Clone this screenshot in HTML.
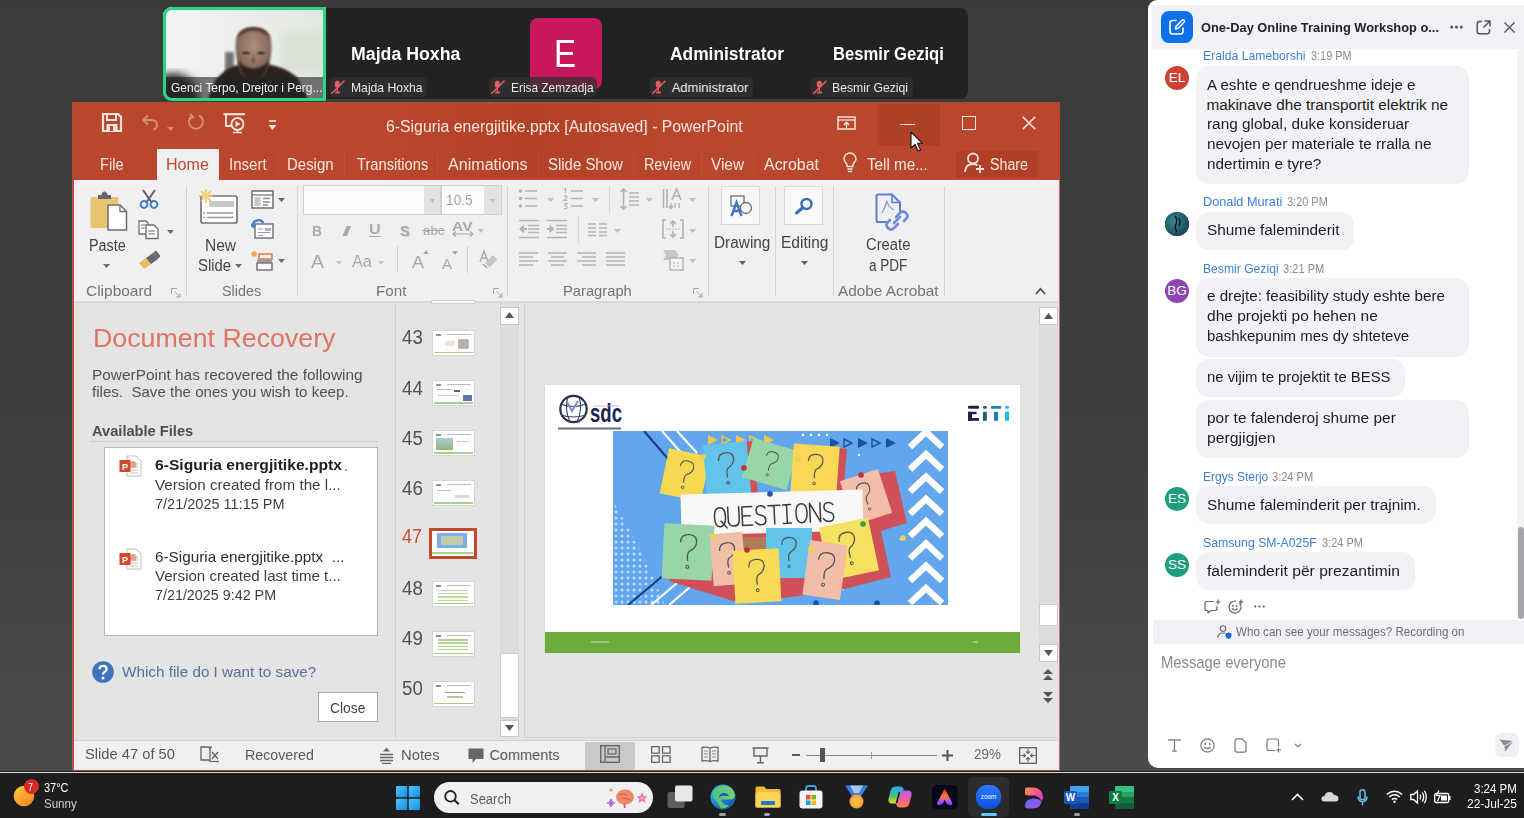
<!DOCTYPE html>
<html><head><meta charset="utf-8">
<style>
*{box-sizing:border-box;margin:0;padding:0}
html,body{width:1524px;height:818px;overflow:hidden;background:linear-gradient(#3b3b3b 0px,#3d3d3d 420px,#4b4b4b 771px,#1d1d1d 771px);font-family:"Liberation Sans",sans-serif;position:relative}
.a{position:absolute}
.t{position:absolute;white-space:pre;line-height:1;transform-origin:0 0}
svg{position:absolute;overflow:visible}

</style></head><body>
<div class="a" style="left:163px;top:8px;width:805px;height:91px;background:#222;border-radius:8px"></div>
<div class="a" style="left:163px;top:7px;width:163px;height:94px;border-radius:9px 2px 2px 9px;overflow:hidden;background:#e9ecea">
<svg style="left:0;top:0" width="163" height="94" viewBox="0 0 163 94">
<defs>
<filter id="bl4"><feGaussianBlur stdDeviation="4"/></filter>
<filter id="bl2"><feGaussianBlur stdDeviation="1.6"/></filter>
<filter id="bl1"><feGaussianBlur stdDeviation="0.9"/></filter>
<linearGradient id="vbg" x1="0" y1="0" x2="1" y2="0"><stop offset="0" stop-color="#f3f5f4"/><stop offset="0.5" stop-color="#eceeec"/><stop offset="1" stop-color="#e2e6e0"/></linearGradient>
<radialGradient id="skin" cx="0.5" cy="0.35" r="0.7"><stop offset="0" stop-color="#b09080"/><stop offset="0.6" stop-color="#8a6a5c"/><stop offset="1" stop-color="#5e4a42"/></radialGradient>
</defs>
<rect width="163" height="94" fill="url(#vbg)"/>
<rect x="118" y="25" width="45" height="40" fill="#dde2d8" filter="url(#bl4)"/>
<ellipse cx="10" cy="90" rx="26" ry="24" fill="#2a2a2a" filter="url(#bl4)"/>
<rect x="62" y="45" width="9" height="28" fill="#707270" filter="url(#bl2)"/>
<path d="M44 94 L52 74 Q62 60 78 57 L104 57 Q122 60 134 70 L146 94 Z" fill="#2b2421" filter="url(#bl1)"/>
<path d="M72.5 41 Q72 20 90.5 20 Q109 20 108.5 41 Q108 60 100 69 Q95 74 90.5 74 Q86 74 81 69 Q73 60 72.5 41 Z" fill="url(#skin)" filter="url(#bl1)"/>
<path d="M73 34 Q75 21 90.5 20.5 Q106 21 108 34 Q104 24 90.5 23.5 Q77 24 73 34 Z" fill="#4a3a34" filter="url(#bl1)"/>
<path d="M75 53 Q77 66 83 71.5 Q90.5 77 98 71.5 Q104 66 106 53 Q101 61 90.5 61.5 Q80 61 75 53 Z" fill="#2c221f" filter="url(#bl1)"/>
<ellipse cx="83" cy="46" rx="4" ry="1.6" fill="#3e2e28" filter="url(#bl1)"/>
<ellipse cx="98" cy="46" rx="4" ry="1.6" fill="#3e2e28" filter="url(#bl1)"/>
<path d="M90 47 L88.5 56 L92.5 56 Z" fill="#6a5048" filter="url(#bl1)"/>
<rect x="0" y="70" width="163" height="24" fill="rgba(35,35,35,0.6)"/>
</svg>
</div>
<div class="a" style="left:163px;top:7px;width:163px;height:94px;border-radius:9px 2px 2px 9px;border:3px solid #25d882"></div>
<span class="t" id="t0" style="left:170.50px;top:80.69px;font-size:13.00px;color:#f0f0f0;transform:scaleX(0.9210);">Genci Terpo, Drejtor i Perg...</span>
<div class="a" style="left:530px;top:18px;width:72px;height:71px;background:#c8185d;border-radius:8px"></div>
<span class="t" id="t1" style="left:554.00px;top:34.18px;font-size:39.00px;color:#ffffff;transform:scaleX(0.8456);">E</span>
<span class="t" id="t2" style="left:350.60px;top:44.91px;font-size:18.30px;color:#ffffff;font-weight:700;transform:scaleX(0.9702);">Majda Hoxha</span>
<div class="a" style="left:329px;top:77px;width:98px;height:20px;background:rgba(50,50,50,0.75);border-radius:5px"></div>
<svg style="left:331px;top:80px" width="14" height="14" viewBox="0 0 14 14"><rect x="3.8" y="0.7" width="5" height="7" rx="2.5" fill="#e85a60"/><rect x="5.8" y="7" width="1.2" height="4.5" fill="#e85a60"/><rect x="4" y="11.5" width="5" height="1.9" rx="0.8" fill="#e85a60"/><path d="M0.8 13.2 L13 1.2" stroke="#e85a60" stroke-width="1.6" stroke-linecap="round"/></svg>
<span class="t" id="t3" style="left:350.60px;top:80.89px;font-size:13.00px;color:#e8e8e8;transform:scaleX(0.9346);">Majda Hoxha</span>
<div class="a" style="left:489px;top:77px;width:108px;height:20px;background:rgba(50,50,50,0.75);border-radius:5px"></div>
<svg style="left:491px;top:80px" width="14" height="14" viewBox="0 0 14 14"><rect x="3.8" y="0.7" width="5" height="7" rx="2.5" fill="#e85a60"/><rect x="5.8" y="7" width="1.2" height="4.5" fill="#e85a60"/><rect x="4" y="11.5" width="5" height="1.9" rx="0.8" fill="#e85a60"/><path d="M0.8 13.2 L13 1.2" stroke="#e85a60" stroke-width="1.6" stroke-linecap="round"/></svg>
<span class="t" id="t4" style="left:510.80px;top:80.89px;font-size:13.00px;color:#e8e8e8;transform:scaleX(0.9135);">Erisa Zemzadja</span>
<span class="t" id="t5" style="left:670.40px;top:44.91px;font-size:18.30px;color:#ffffff;font-weight:700;transform:scaleX(0.9503);">Administrator</span>
<div class="a" style="left:650px;top:77px;width:103px;height:20px;background:rgba(50,50,50,0.75);border-radius:5px"></div>
<svg style="left:652px;top:80px" width="14" height="14" viewBox="0 0 14 14"><rect x="3.8" y="0.7" width="5" height="7" rx="2.5" fill="#e85a60"/><rect x="5.8" y="7" width="1.2" height="4.5" fill="#e85a60"/><rect x="4" y="11.5" width="5" height="1.9" rx="0.8" fill="#e85a60"/><path d="M0.8 13.2 L13 1.2" stroke="#e85a60" stroke-width="1.6" stroke-linecap="round"/></svg>
<span class="t" id="t6" style="left:671.70px;top:80.89px;font-size:13.00px;color:#e8e8e8;">Administrator</span>
<span class="t" id="t7" style="left:833.10px;top:44.91px;font-size:18.30px;color:#ffffff;font-weight:700;transform:scaleX(0.9096);">Besmir Geziqi</span>
<div class="a" style="left:811px;top:77px;width:102px;height:20px;background:rgba(50,50,50,0.75);border-radius:5px"></div>
<svg style="left:813px;top:80px" width="14" height="14" viewBox="0 0 14 14"><rect x="3.8" y="0.7" width="5" height="7" rx="2.5" fill="#e85a60"/><rect x="5.8" y="7" width="1.2" height="4.5" fill="#e85a60"/><rect x="4" y="11.5" width="5" height="1.9" rx="0.8" fill="#e85a60"/><path d="M0.8 13.2 L13 1.2" stroke="#e85a60" stroke-width="1.6" stroke-linecap="round"/></svg>
<span class="t" id="t8" style="left:832.40px;top:80.89px;font-size:13.00px;color:#e8e8e8;transform:scaleX(0.9404);">Besmir Geziqi</span>
<div class="a" style="left:72px;top:102px;width:988px;height:670px;background:#e4e4e4"></div>
<div class="a" style="left:72px;top:102px;width:988px;height:78px;background:#b9472d"></div>
<div class="a" style="left:380px;top:104px;width:300px;height:74px;background:linear-gradient(90deg,rgba(150,40,20,0) 0%,rgba(150,40,20,0.18) 50%,rgba(150,40,20,0) 100%)"></div>
<div class="a" style="left:878px;top:104px;width:62px;height:42px;background:rgba(140,40,20,0.22)"></div>
<svg style="left:102px;top:113px" width="20" height="19" viewBox="0 0 20 19"><path d="M1 1 H16 L19 4 V18 H1 Z" fill="none" stroke="#f6e4dc" stroke-width="2.2"/><rect x="5" y="1" width="9" height="6" fill="none" stroke="#f6e4dc" stroke-width="2"/><rect x="4.5" y="11" width="11" height="7" fill="#f6e4dc"/><rect x="8" y="13" width="3" height="5" fill="#b9472d"/></svg>
<svg style="left:141px;top:114px" width="18" height="17" viewBox="0 0 18 17"><path d="M2 6 L7 1.5 M2 6 L7 10.5 M2 6 H10 Q16 6 16 11 Q16 15 12 15.5" fill="none" stroke="#d98a72" stroke-width="2"/></svg>
<svg style="left:167px;top:127px" width="7" height="5" viewBox="0 0 7 5"><path d="M0 0 H7 L3.5 4 Z" fill="#d98a72"/></svg>
<svg style="left:187px;top:113px" width="18" height="18" viewBox="0 0 18 18"><path d="M12 2.5 A7 7 0 1 1 5 3" fill="none" stroke="#d98a72" stroke-width="2"/><path d="M3 1 L6 4 L2.5 6" fill="none" stroke="#d98a72" stroke-width="2"/></svg>
<svg style="left:223px;top:113px" width="23" height="21" viewBox="0 0 23 21"><path d="M0.5 1.2 H22" stroke="#f6e4dc" stroke-width="2.2"/><path d="M3 2 V13 H8" fill="none" stroke="#f6e4dc" stroke-width="1.8"/><circle cx="14.5" cy="11" r="6" fill="none" stroke="#f6e4dc" stroke-width="1.8"/><path d="M12.5 8 L17.5 11 L12.5 14 Z" fill="#f6e4dc"/><path d="M10 19.5 H19 M14.5 17 V20" stroke="#f6e4dc" stroke-width="1.6"/></svg>
<svg style="left:268px;top:120px" width="9" height="11" viewBox="0 0 9 11"><path d="M1 1 H8" stroke="#f6e4dc" stroke-width="1.6"/><path d="M0.5 5 H8.5 L4.5 10 Z" fill="#f6e4dc"/></svg>
<span class="t" id="t9" style="left:386.40px;top:119.05px;font-size:16.00px;color:#f8e6de;transform:scaleX(0.9876);">6-Siguria energjitike.pptx [Autosaved] - PowerPoint</span>
<svg style="left:837px;top:116px" width="19" height="14" viewBox="0 0 19 14"><rect x="1" y="1" width="17" height="12" fill="none" stroke="#f6e4dc" stroke-width="1.5"/><path d="M1 4 H18" stroke="#f6e4dc" stroke-width="1.3"/><path d="M9.5 12 V6.5 M6.8 9 L9.5 6.3 L12.2 9" fill="none" stroke="#f6e4dc" stroke-width="1.4"/></svg>
<div class="a" style="left:900px;top:123.5px;width:15px;height:1.2px;background:#f6e4dc"></div>
<div class="a" style="left:962px;top:116px;width:14px;height:14px;border:1.3px solid #f6e4dc"></div>
<svg style="left:1022px;top:116px" width="14" height="14" viewBox="0 0 14 14"><path d="M0.7 0.7 L13.3 13.3 M13.3 0.7 L0.7 13.3" stroke="#f6e4dc" stroke-width="1.6"/></svg>
<svg style="left:910px;top:131px" width="13" height="21" viewBox="0 0 13 21"><path d="M1 1 V17 L5 13.3 L8 20 L10.5 19 L7.6 12.3 L12.5 12.3 Z" fill="#ffffff" stroke="#111" stroke-width="1.1" stroke-linejoin="round"/></svg>
<div class="a" style="left:157px;top:149px;width:62px;height:32px;background:#f0eff2"></div>
<span class="t" id="t10" style="left:100.40px;top:157.09px;font-size:15.60px;color:#f8e6de;transform:scaleX(0.9387);">File</span>
<span class="t" id="t11" style="left:166.30px;top:157.09px;font-size:15.60px;color:#c5462c;transform:scaleX(1.0310);">Home</span>
<span class="t" id="t12" style="left:229.30px;top:157.09px;font-size:15.60px;color:#f8e6de;transform:scaleX(0.9667);">Insert</span>
<span class="t" id="t13" style="left:287.40px;top:157.09px;font-size:15.60px;color:#f8e6de;transform:scaleX(0.9599);">Design</span>
<span class="t" id="t14" style="left:356.50px;top:157.09px;font-size:15.60px;color:#f8e6de;transform:scaleX(0.9420);">Transitions</span>
<span class="t" id="t15" style="left:448.40px;top:157.09px;font-size:15.60px;color:#f8e6de;transform:scaleX(1.0319);">Animations</span>
<span class="t" id="t16" style="left:547.80px;top:157.09px;font-size:15.60px;color:#f8e6de;transform:scaleX(0.9588);">Slide Show</span>
<span class="t" id="t17" style="left:644.00px;top:157.09px;font-size:15.60px;color:#f8e6de;transform:scaleX(0.9190);">Review</span>
<span class="t" id="t18" style="left:711.00px;top:157.09px;font-size:15.60px;color:#f8e6de;transform:scaleX(0.9842);">View</span>
<span class="t" id="t19" style="left:764.00px;top:157.09px;font-size:15.60px;color:#f8e6de;transform:scaleX(1.0233);">Acrobat</span>
<span class="t" id="t20" style="left:867.00px;top:157.09px;font-size:15.60px;color:#f8e6de;transform:scaleX(0.9745);">Tell me...</span>
<div class="a" style="left:277.5px;top:153px;width:1px;height:22px;background:rgba(255,200,180,0.07)"></div>
<div class="a" style="left:344.4px;top:153px;width:1px;height:22px;background:rgba(255,200,180,0.07)"></div>
<div class="a" style="left:437.0px;top:153px;width:1px;height:22px;background:rgba(255,200,180,0.07)"></div>
<div class="a" style="left:538.0px;top:153px;width:1px;height:22px;background:rgba(255,200,180,0.07)"></div>
<div class="a" style="left:633.0px;top:153px;width:1px;height:22px;background:rgba(255,200,180,0.07)"></div>
<div class="a" style="left:701.0px;top:153px;width:1px;height:22px;background:rgba(255,200,180,0.07)"></div>
<div class="a" style="left:753.0px;top:153px;width:1px;height:22px;background:rgba(255,200,180,0.07)"></div>
<svg style="left:843px;top:154px" width="14" height="19" viewBox="0 0 14 19"><path d="M4.2 12.5 Q4.2 10 2.6 8.3 Q1 6.5 1 5 A6 6 0 0 1 13 5 Q13 6.5 11.4 8.3 Q9.8 10 9.8 12.5 Z" fill="none" stroke="#f6e4dc" stroke-width="1.5"/><path d="M4.5 15 H9.5 M5 17.5 H9" stroke="#f6e4dc" stroke-width="1.5"/></svg>
<div class="a" style="left:956px;top:151px;width:82px;height:27px;background:rgba(140,40,20,0.22)"></div>
<svg style="left:964px;top:152px" width="21" height="21" viewBox="0 0 21 21"><circle cx="9" cy="6.5" r="5" fill="none" stroke="#f6e4dc" stroke-width="1.8"/><path d="M1 20 Q1.5 12 9 12 Q12 12 13.5 13.5" fill="none" stroke="#f6e4dc" stroke-width="1.8"/><path d="M16 13 V21 M12 17 H20" stroke="#f6e4dc" stroke-width="1.8"/></svg>
<span class="t" id="t21" style="left:990.00px;top:157.09px;font-size:15.60px;color:#f8e6de;transform:scaleX(0.9129);">Share</span>
<div class="a" style="left:74px;top:180px;width:984px;height:121px;background:#f0eff2"></div>
<div class="a" style="left:74px;top:301px;width:984px;height:2px;background:#d9d8db"></div>
<div class="a" style="left:185.9px;top:186px;width:1px;height:110px;background:#d5d4d7"></div>
<div class="a" style="left:296.7px;top:186px;width:1px;height:110px;background:#d5d4d7"></div>
<div class="a" style="left:507.4px;top:186px;width:1px;height:110px;background:#d5d4d7"></div>
<div class="a" style="left:707.7px;top:186px;width:1px;height:110px;background:#d5d4d7"></div>
<div class="a" style="left:775.0px;top:186px;width:1px;height:110px;background:#d5d4d7"></div>
<div class="a" style="left:833.4px;top:186px;width:1px;height:110px;background:#d5d4d7"></div>
<div class="a" style="left:944.0px;top:186px;width:1px;height:110px;background:#d5d4d7"></div>
<span class="t" id="t22" style="left:86.00px;top:284.02px;font-size:14.50px;color:#747476;transform:scaleX(1.0664);">Clipboard</span>
<span class="t" id="t23" style="left:221.50px;top:284.02px;font-size:14.50px;color:#747476;transform:scaleX(0.9949);">Slides</span>
<span class="t" id="t24" style="left:376.00px;top:284.02px;font-size:14.50px;color:#747476;transform:scaleX(1.0512);">Font</span>
<span class="t" id="t25" style="left:563.00px;top:284.02px;font-size:14.50px;color:#747476;transform:scaleX(1.0160);">Paragraph</span>
<span class="t" id="t26" style="left:838.20px;top:284.02px;font-size:14.50px;color:#747476;transform:scaleX(1.0574);">Adobe Acrobat</span>
<svg style="left:171.3px;top:287.7px" width="10" height="10" viewBox="0 0 10 10"><path d="M0.5 6 V0.5 H6" fill="none" stroke="#a4a4a6" stroke-width="1"/><path d="M3.5 3.5 L9 9 M5 9 H9 V5" fill="none" stroke="#a4a4a6" stroke-width="1"/></svg>
<svg style="left:492.9px;top:287.7px" width="10" height="10" viewBox="0 0 10 10"><path d="M0.5 6 V0.5 H6" fill="none" stroke="#a4a4a6" stroke-width="1"/><path d="M3.5 3.5 L9 9 M5 9 H9 V5" fill="none" stroke="#a4a4a6" stroke-width="1"/></svg>
<svg style="left:693.0px;top:287.7px" width="10" height="10" viewBox="0 0 10 10"><path d="M0.5 6 V0.5 H6" fill="none" stroke="#a4a4a6" stroke-width="1"/><path d="M3.5 3.5 L9 9 M5 9 H9 V5" fill="none" stroke="#a4a4a6" stroke-width="1"/></svg>
<svg style="left:90px;top:191px" width="38" height="40" viewBox="0 0 38 40">
<rect x="0.5" y="6" width="28" height="31" rx="1.5" fill="#e9c46e"/>
<path d="M8 8 V4 H11.5 Q12 0.5 14.5 0.5 Q17 0.5 17.5 4 H21 V8 Z" fill="#6b6370"/>
<path d="M18 14 H30 L36.5 20.5 V39 H18 Z" fill="#ffffff" stroke="#6e6e70" stroke-width="1.5"/>
<path d="M30 14 V20.5 H36.5" fill="none" stroke="#6e6e70" stroke-width="1.3"/>
</svg>
<span class="t" id="t27" style="left:88.80px;top:237.59px;font-size:15.60px;color:#444446;transform:scaleX(0.9200);">Paste</span>
<svg style="left:102.6px;top:263.5px" width="7" height="4" viewBox="0 0 7 4"><path d="M0 0 H7 L3.5 4 Z" fill="#6a6a6c"/></svg>
<svg style="left:139px;top:189px" width="20" height="20" viewBox="0 0 20 20"><path d="M4 1 L13 14 M16 1 L7 14" stroke="#616164" stroke-width="2"/><circle cx="5" cy="15.5" r="3.4" fill="none" stroke="#3f7fc4" stroke-width="2"/><circle cx="15" cy="15.5" r="3.4" fill="none" stroke="#3f7fc4" stroke-width="2"/></svg>
<svg style="left:138px;top:220px" width="21" height="19" viewBox="0 0 21 19"><path d="M1 1 H8 L10 3 V14 H1 Z" fill="#fff" stroke="#6e6e70" stroke-width="1.3"/><path d="M8 5 H16 L20 9 V18.5 H8 Z" fill="#fff" stroke="#6e6e70" stroke-width="1.3"/><path d="M3 5 H7 M3 8 H7 M10.5 11 H17 M10.5 14 H17" stroke="#6e6e70" stroke-width="1.1"/></svg>
<svg style="left:166.8px;top:229.5px" width="7" height="4" viewBox="0 0 7 4"><path d="M0 0 H7 L3.5 4 Z" fill="#6a6a6c"/></svg>
<svg style="left:138px;top:250px" width="23" height="19" viewBox="0 0 23 19"><path d="M1 13 L8 8 L13 14 L6 19 Z" fill="#e6bf63"/><path d="M8 8 L15 3 L20 9 L13 14 Z" fill="#6b6370"/><path d="M15 3 L18 0.5 L22.5 6 L20 9 Z" fill="#6b6370"/></svg>
<svg style="left:198px;top:188px" width="42" height="38" viewBox="0 0 42 38">
<rect x="3" y="8" width="36" height="27" rx="2" fill="#fff" stroke="#777779" stroke-width="1.7"/>
<rect x="11" y="13" width="25" height="6" fill="#c8c8ca"/>
<path d="M9 25 H35 M9 29.5 H35" stroke="#9a9a9c" stroke-width="1.5"/>
<path d="M5 25 H7 M5 29.5 H7" stroke="#9a9a9c" stroke-width="1.5"/>
<g stroke="#f0c15a" stroke-width="1.5"><path d="M8 1 V15 M1 8 H15 M3 3 L13 13 M13 3 L3 13"/></g>
<circle cx="8" cy="8" r="3.6" fill="#f5d27c"/>
</svg>
<span class="t" id="t28" style="left:204.70px;top:237.59px;font-size:15.60px;color:#444446;transform:scaleX(0.9967);">New</span>
<span class="t" id="t29" style="left:198.00px;top:258.19px;font-size:15.60px;color:#444446;transform:scaleX(0.9514);">Slide</span>
<svg style="left:234.8px;top:264.0px" width="7" height="4" viewBox="0 0 7 4"><path d="M0 0 H7 L3.5 4 Z" fill="#6a6a6c"/></svg>
<svg style="left:251px;top:190px" width="23" height="19" viewBox="0 0 23 19"><rect x="1" y="1" width="21" height="17" fill="#fff" stroke="#6e6e70" stroke-width="1.5"/><path d="M1 5 H22" stroke="#6e6e70" stroke-width="1.2"/><rect x="3.5" y="7" width="6" height="9" fill="#c8c8ca"/><path d="M12 8.5 H19 M12 12 H19 M12 15 H17" stroke="#8a8a8c" stroke-width="1.3"/></svg>
<svg style="left:278.3px;top:197.8px" width="7" height="4" viewBox="0 0 7 4"><path d="M0 0 H7 L3.5 4 Z" fill="#6a6a6c"/></svg>
<svg style="left:251px;top:219px" width="23" height="20" viewBox="0 0 23 20"><rect x="4" y="5" width="18" height="14" fill="#fff" stroke="#6e6e70" stroke-width="1.4"/><path d="M7 10 H12 M7 13.5 H19 M7 16.5 H12" stroke="#9a9a9c" stroke-width="1.2"/><rect x="14" y="9" width="6" height="3" fill="#9ab8d8"/><path d="M1.5 8 A6 6 0 0 1 12.5 4" fill="none" stroke="#3f7fc4" stroke-width="2.2"/><path d="M0 5 L2 9.5 L5.5 6.5 Z" fill="#3f7fc4"/></svg>
<svg style="left:251px;top:250px" width="23" height="21" viewBox="0 0 23 21"><g stroke="#f0a35a" stroke-width="1.3"><path d="M3 1 V7 M0 4 H6 M1 2 L5 6 M5 2 L1 6"/></g><rect x="8" y="4" width="13" height="5" fill="none" stroke="#e57a3a" stroke-width="1.5"/><rect x="6" y="9.5" width="15" height="3" fill="#9a9a9c"/><rect x="6" y="13" width="15" height="7" fill="#fff" stroke="#6e6e70" stroke-width="1.4"/></svg>
<svg style="left:278.3px;top:258.5px" width="7" height="4" viewBox="0 0 7 4"><path d="M0 0 H7 L3.5 4 Z" fill="#6a6a6c"/></svg>
<div class="a" style="left:303px;top:185px;width:138px;height:30px;background:#fdfdfd;border:1px solid #cfcfd1"></div>
<div class="a" style="left:424px;top:186px;width:16px;height:28px;background:#e3e3e5"></div>
<svg style="left:429.5px;top:199.0px" width="5" height="4" viewBox="0 0 5 4"><path d="M0 0 H5 L2.5 4 Z" fill="#c0c0c2"/></svg>
<div class="a" style="left:441px;top:185px;width:61px;height:30px;background:#fdfdfd;border:1px solid #cfcfd1"></div>
<div class="a" style="left:484px;top:186px;width:17px;height:28px;background:#e3e3e5"></div>
<svg style="left:490.0px;top:199.0px" width="5" height="4" viewBox="0 0 5 4"><path d="M0 0 H5 L2.5 4 Z" fill="#c0c0c2"/></svg>
<span class="t" id="t30" style="left:446.30px;top:192.28px;font-size:15.50px;color:#a2a2a4;transform:scaleX(0.8849);">10.5</span>
<span class="t" id="t31" style="left:311.50px;top:224.32px;font-size:14.50px;color:#a9a9ab;font-weight:700;transform:scaleX(0.9538);">B</span>
<span class="t" id="t32" style="left:341.60px;top:224.32px;font-size:14.50px;color:#a9a9ab;font-weight:700;transform:scaleX(2.1085);font-style:italic;font-family:"Liberation Serif",serif;">I</span>
<span class="t" id="t33" style="left:369.00px;top:222.32px;font-size:14.50px;color:#a9a9ab;font-weight:700;transform:scaleX(1.1064);">U</span>
<div class="a" style="left:369px;top:236px;width:12px;height:1.2px;background:#a9a9ab"></div>
<span class="t" id="t34" style="left:400.00px;top:223.48px;font-size:15.50px;color:#a9a9ab;font-weight:700;transform:scaleX(0.9281);text-shadow:1px 1px 1px #c8c8ca;">S</span>
<span class="t" id="t35" style="left:422.60px;top:225.42px;font-size:12.50px;color:#a9a9ab;transform:scaleX(1.0617);">abc</span>
<div class="a" style="left:422px;top:230px;width:23px;height:1.2px;background:#a9a9ab"></div>
<span class="t" id="t36" style="left:452.40px;top:220.84px;font-size:12.00px;color:#a9a9ab;font-weight:700;transform:scaleX(1.3053);">AV</span>
<svg style="left:452px;top:231px" width="22" height="6" viewBox="0 0 22 6"><path d="M1 3 H21 M4 0.5 L1 3 L4 5.5 M18 0.5 L21 3 L18 5.5" fill="none" stroke="#a9a9ab" stroke-width="1.2"/></svg>
<svg style="left:478.0px;top:228.5px" width="6" height="4" viewBox="0 0 6 4"><path d="M0 0 H6 L3.0 4 Z" fill="#c0c0c2"/></svg>
<span class="t" id="t37" style="left:311.00px;top:251.71px;font-size:19.00px;color:#a9a9ab;transform:scaleX(1.0246);">A</span>
<svg style="left:336.0px;top:261.0px" width="6" height="4" viewBox="0 0 6 4"><path d="M0 0 H6 L3.0 4 Z" fill="#c4c4c6"/></svg>
<span class="t" id="t38" style="left:351.50px;top:253.65px;font-size:16.00px;color:#a9a9ab;transform:scaleX(1.0164);">Aa</span>
<svg style="left:378.0px;top:261.0px" width="6" height="4" viewBox="0 0 6 4"><path d="M0 0 H6 L3.0 4 Z" fill="#c4c4c6"/></svg>
<div class="a" style="left:397px;top:246px;width:1px;height:27px;background:#d0d0d2"></div>
<span class="t" id="t39" style="left:411.90px;top:254.11px;font-size:17.00px;color:#a9a9ab;transform:scaleX(1.0579);">A</span>
<svg style="left:423px;top:250px" width="6" height="4" viewBox="0 0 6 4"><path d="M0 4 H6 L3 0 Z" fill="#a9a9ab"/></svg>
<span class="t" id="t40" style="left:441.70px;top:256.65px;font-size:14.00px;color:#a9a9ab;transform:scaleX(1.0702);">A</span>
<svg style="left:452px;top:251px" width="6" height="4" viewBox="0 0 6 4"><path d="M0 0 H6 L3 4 Z" fill="#a9a9ab"/></svg>
<div class="a" style="left:467px;top:246px;width:1px;height:27px;background:#d0d0d2"></div>
<svg style="left:479px;top:250px" width="19" height="19" viewBox="0 0 19 19"><path d="M1 12 L5 1 L9 12 M2.5 8 H7.5" fill="none" stroke="#a9a9ab" stroke-width="1.4"/><path d="M6 13 L14 5 L18.5 9.5 L10.5 17.5 Z" fill="#c6c6c8"/><path d="M4 14 L8 18" stroke="#a9a9ab" stroke-width="1.6"/></svg>
<svg style="left:518px;top:188px" width="20" height="21" viewBox="0 0 20 21"><g fill="#b3b3b5"><circle cx="2.5" cy="3" r="1.8"/><circle cx="2.5" cy="10.5" r="1.8"/><circle cx="2.5" cy="18" r="1.8"/></g><path d="M7 3 H19 M7 10.5 H19 M7 18 H19" stroke="#b3b3b5" stroke-width="1.6"/></svg>
<svg style="left:547.0px;top:198.0px" width="7" height="4" viewBox="0 0 7 4"><path d="M0 0 H7 L3.5 4 Z" fill="#c0c0c2"/></svg>
<svg style="left:563px;top:188px" width="21" height="22" viewBox="0 0 21 22"><g fill="none" stroke="#b3b3b5" stroke-width="1.1"><path d="M1 1.5 L2.5 0.5 V5.5"/><path d="M0.8 8.5 Q2.5 6.8 3.8 8.5 Q4 10 0.8 12.5 H4"/><path d="M0.8 15.5 H3.8 L2 17.5 Q4 17.5 4 19.5 Q3 21.5 0.8 20.5"/></g><path d="M8 3 H20 M8 10.5 H20 M8 18 H20" stroke="#b3b3b5" stroke-width="1.6"/></svg>
<svg style="left:592.0px;top:198.0px" width="7" height="4" viewBox="0 0 7 4"><path d="M0 0 H7 L3.5 4 Z" fill="#c0c0c2"/></svg>
<div class="a" style="left:609px;top:186px;width:1px;height:27px;background:#d6d6d8"></div>
<svg style="left:620px;top:188px" width="20" height="22" viewBox="0 0 20 22"><path d="M3.5 1 V21 M0.5 4 L3.5 1 L6.5 4 M0.5 18 L3.5 21 L6.5 18" fill="none" stroke="#b3b3b5" stroke-width="1.6"/><path d="M9 5 H19 M9 9 H19 M9 13 H19 M9 17 H19" stroke="#b3b3b5" stroke-width="1.6"/></svg>
<svg style="left:645.6px;top:198.0px" width="7" height="4" viewBox="0 0 7 4"><path d="M0 0 H7 L3.5 4 Z" fill="#c0c0c2"/></svg>
<svg style="left:662px;top:188px" width="21" height="21" viewBox="0 0 21 21"><path d="M1.5 1 V20 M5 1 V20" stroke="#b3b3b5" stroke-width="1.6"/><path d="M10 12 L14.5 1 L19 12 M11.5 8 H17.5" fill="none" stroke="#b3b3b5" stroke-width="1.7"/><path d="M9 15 V20 M13 15 V20 M17 15 V20 M7 18 L9 20.5 L11 18" stroke="#b3b3b5" stroke-width="1.3" fill="none"/></svg>
<svg style="left:689.0px;top:198.0px" width="7" height="4" viewBox="0 0 7 4"><path d="M0 0 H7 L3.5 4 Z" fill="#c0c0c2"/></svg>
<svg style="left:518px;top:219px" width="22" height="20" viewBox="0 0 22 20"><path d="M1 1.5 H21 M10 6.5 H21 M10 10 H21 M10 13.5 H21 M1 18.5 H21" stroke="#b3b3b5" stroke-width="1.6"/><path d="M1 10 L6 5.5 V14.5 Z" fill="#b3b3b5"/><path d="M5 10 H9" stroke="#b3b3b5" stroke-width="2"/></svg>
<svg style="left:546px;top:219px" width="22" height="20" viewBox="0 0 22 20"><path d="M1 1.5 H21 M10 6.5 H21 M10 10 H21 M10 13.5 H21 M1 18.5 H21" stroke="#b3b3b5" stroke-width="1.6"/><path d="M8.5 10 L3.5 5.5 V14.5 Z" fill="#b3b3b5"/><path d="M1 10 H5" stroke="#b3b3b5" stroke-width="2"/></svg>
<div class="a" style="left:578px;top:216px;width:1px;height:27px;background:#d6d6d8"></div>
<svg style="left:588px;top:223px" width="19" height="13" viewBox="0 0 19 13"><path d="M0 1 H8 M11 1 H19 M0 5 H8 M11 5 H19 M0 9 H8 M11 9 H19 M0 12.5 H8 M11 12.5 H19" stroke="#b3b3b5" stroke-width="1.5"/></svg>
<svg style="left:614.0px;top:228.5px" width="7" height="4" viewBox="0 0 7 4"><path d="M0 0 H7 L3.5 4 Z" fill="#c0c0c2"/></svg>
<svg style="left:662px;top:219px" width="22" height="20" viewBox="0 0 22 20"><path d="M4 1 H1 V19 H4 M18 1 H21 V19 H18" fill="none" stroke="#b3b3b5" stroke-width="1.6"/><path d="M11 2 V8 M8 5 L11 2 L14 5 M11 12 V18 M8 15 L11 18 L14 15" fill="none" stroke="#b3b3b5" stroke-width="1.6"/><path d="M4 10 H18" stroke="#b3b3b5" stroke-width="0.8" stroke-dasharray="2 1"/></svg>
<svg style="left:689.0px;top:228.5px" width="7" height="4" viewBox="0 0 7 4"><path d="M0 0 H7 L3.5 4 Z" fill="#c0c0c2"/></svg>
<svg style="left:518.8px;top:252px" width="20" height="15" viewBox="0 0 20 15"><path d="M0.0 1.0 H19.0 M0.0 5.0 H14.0 M0.0 9.0 H19.0 M0.0 13.0 H14.0 " stroke="#b3b3b5" stroke-width="1.6"/></svg>
<svg style="left:547.8px;top:252px" width="20" height="15" viewBox="0 0 20 15"><path d="M0.0 1.0 H19.0 M3.0 5.0 H16.0 M0.0 9.0 H19.0 M3.0 13.0 H16.0 " stroke="#b3b3b5" stroke-width="1.6"/></svg>
<svg style="left:576.8px;top:252px" width="20" height="15" viewBox="0 0 20 15"><path d="M0.0 1.0 H19.0 M5.0 5.0 H19.0 M0.0 9.0 H19.0 M5.0 13.0 H19.0 " stroke="#b3b3b5" stroke-width="1.6"/></svg>
<svg style="left:605.8px;top:252px" width="20" height="15" viewBox="0 0 20 15"><path d="M0.0 1.0 H19.0 M0.0 5.0 H19.0 M0.0 9.0 H19.0 M0.0 13.0 H19.0 " stroke="#b3b3b5" stroke-width="1.6"/></svg>
<svg style="left:662px;top:249px" width="22" height="22" viewBox="0 0 22 22"><path d="M1 1 H13 L17 6 L13 11 H1 L4 6 Z" fill="#c6c6c8"/><rect x="8" y="9" width="13" height="12" fill="#f4f4f6" stroke="#b3b3b5" stroke-width="1.4"/><path d="M11 14 H13 M15 14 H17 M11 17 H13 M15 17 H17" stroke="#b3b3b5" stroke-width="1"/></svg>
<svg style="left:689.0px;top:259.0px" width="7" height="4" viewBox="0 0 7 4"><path d="M0 0 H7 L3.5 4 Z" fill="#c0c0c2"/></svg>
<div class="a" style="left:721px;top:186px;width:39px;height:39px;background:#f9f9fa;border:1px solid #d8d8da"></div>
<svg style="left:730px;top:195px" width="23" height="22" viewBox="0 0 23 22"><rect x="1" y="1" width="13" height="10" fill="none" stroke="#6e6e70" stroke-width="1.3"/><circle cx="16" cy="13" r="5.5" fill="#f9f9fa" stroke="#6e6e70" stroke-width="1.3"/><path d="M1.5 21 L6.5 7.5 L11.5 21 M3.5 16 H9.5" fill="none" stroke="#3f76bd" stroke-width="2.4"/></svg>
<span class="t" id="t41" style="left:713.60px;top:235.19px;font-size:15.60px;color:#444446;transform:scaleX(0.9860);">Drawing</span>
<svg style="left:739.2px;top:261.2px" width="7" height="4" viewBox="0 0 7 4"><path d="M0 0 H7 L3.5 4 Z" fill="#5f5f62"/></svg>
<div class="a" style="left:784px;top:186px;width:39px;height:39px;background:#f9f9fa;border:1px solid #d8d8da"></div>
<svg style="left:795px;top:197px" width="19" height="17" viewBox="0 0 19 17"><circle cx="11.5" cy="7" r="5" fill="none" stroke="#3a6fb5" stroke-width="2.4"/><path d="M8 10.5 L1.5 16" stroke="#3a6fb5" stroke-width="3" stroke-linecap="round"/></svg>
<span class="t" id="t42" style="left:780.50px;top:235.19px;font-size:15.60px;color:#444446;transform:scaleX(0.9961);">Editing</span>
<svg style="left:800.6px;top:261.2px" width="7" height="4" viewBox="0 0 7 4"><path d="M0 0 H7 L3.5 4 Z" fill="#5f5f62"/></svg>
<svg style="left:875px;top:193px" width="36" height="39" viewBox="0 0 36 39"><path d="M3 1.5 H17 L25 9.5 V19 M13 29 H3 Q1.5 29 1.5 27.5 V3 Q1.5 1.5 3 1.5" fill="none" stroke="#5b7fd6" stroke-width="2"/><path d="M17 1.5 V9.5 H25" fill="none" stroke="#5b7fd6" stroke-width="1.5"/><path d="M7 20 Q10 15 12 8 Q13 14 19 17" fill="none" stroke="#8b9bd0" stroke-width="1.3"/><g fill="none" stroke="#6f8de0" stroke-width="2.6" stroke-linecap="round"><path d="M21 24 L25 20 Q28 17 31 20 Q34 23 31 26 L29 28"/><path d="M23 31 L19 35 Q16 38 13 35 Q10 32 13 29 L15 27"/><path d="M19 30 L25 24"/></g></svg>
<span class="t" id="t43" style="left:866.30px;top:237.39px;font-size:15.60px;color:#444446;transform:scaleX(0.9485);">Create</span>
<span class="t" id="t44" style="left:868.90px;top:258.39px;font-size:15.60px;color:#444446;transform:scaleX(0.8687);">a PDF</span>
<svg style="left:1035px;top:287px" width="11" height="8" viewBox="0 0 11 8"><path d="M1 7 L5.5 1.8 L10 7" fill="none" stroke="#555" stroke-width="1.8"/></svg>
<div class="a" style="left:72px;top:180px;width:1.5px;height:591px;background:#c0503a"></div>
<div class="a" style="left:1058.5px;top:180px;width:1.5px;height:591px;background:#c87060"></div>
<div class="a" style="left:74px;top:303px;width:321px;height:438px;background:#e4e4e4"></div>

<span class="t" id="t45" style="left:92.50px;top:325.36px;font-size:26.50px;color:#df7462;transform:scaleX(1.0101);">Document Recovery</span>
<span class="t" id="t46" style="left:92.40px;top:367.84px;font-size:14.60px;color:#505050;transform:scaleX(1.0555);">PowerPoint has recovered the following</span>
<span class="t" id="t47" style="left:92.40px;top:385.04px;font-size:14.60px;color:#505050;transform:scaleX(1.0336);">files.  Save the ones you wish to keep.</span>
<span class="t" id="t48" style="left:92.40px;top:423.67px;font-size:14.80px;color:#4e4e50;font-weight:700;transform:scaleX(0.9896);">Available Files</span>
<div class="a" style="left:90px;top:441px;width:288px;height:1px;background:#cdcdcd"></div>
<div class="a" style="left:104px;top:447px;width:274px;height:189px;background:#ffffff;border:1px solid #b4b4b4"></div>
<svg style="left:119.0px;top:455.0px" width="23" height="22" viewBox="0 0 23 22"><path d="M8 1 H17 L22 6 V21 H8 Z" fill="#fff" stroke="#bdbdbd" stroke-width="1"/><path d="M11 9 H19 M11 12 H19 M11 15 H19 M11 18 H19" stroke="#e8b5ad" stroke-width="1"/><circle cx="14" cy="9.5" r="3.5" fill="#d9a59c"/><rect x="0.5" y="5" width="11" height="12" fill="#d04a2e"/><text x="3" y="14.5" font-family="Liberation Sans" font-weight="700" font-size="9" fill="#fff">P</text></svg>
<span class="t" id="t49" style="left:154.90px;top:458.27px;font-size:14.80px;color:#1f1f1f;font-weight:700;transform:scaleX(1.0577);">6-Siguria energjitike.pptx</span>
<div class="a" style="left:345px;top:469px;width:2px;height:2px;background:#d9a080"></div>
<span class="t" id="t50" style="left:154.90px;top:477.94px;font-size:14.60px;color:#3e3e3e;transform:scaleX(1.0412);">Version created from the l...</span>
<span class="t" id="t51" style="left:154.90px;top:496.84px;font-size:14.60px;color:#3e3e3e;transform:scaleX(0.9941);">7/21/2025 11:15 PM</span>
<svg style="left:119.0px;top:547.5px" width="23" height="22" viewBox="0 0 23 22"><path d="M8 1 H17 L22 6 V21 H8 Z" fill="#fff" stroke="#bdbdbd" stroke-width="1"/><path d="M11 9 H19 M11 12 H19 M11 15 H19 M11 18 H19" stroke="#e8b5ad" stroke-width="1"/><circle cx="14" cy="9.5" r="3.5" fill="#d9a59c"/><rect x="0.5" y="5" width="11" height="12" fill="#d04a2e"/><text x="3" y="14.5" font-family="Liberation Sans" font-weight="700" font-size="9" fill="#fff">P</text></svg>
<span class="t" id="t52" style="left:154.90px;top:550.04px;font-size:14.60px;color:#2e2e2e;transform:scaleX(1.0476);">6-Siguria energjitike.pptx  ...</span>
<span class="t" id="t53" style="left:154.90px;top:569.14px;font-size:14.60px;color:#3e3e3e;transform:scaleX(1.0318);">Version created last time t...</span>
<span class="t" id="t54" style="left:154.90px;top:587.94px;font-size:14.60px;color:#3e3e3e;transform:scaleX(0.9819);">7/21/2025 9:42 PM</span>
<svg style="left:91.5px;top:661px" width="22" height="22" viewBox="0 0 22 22"><circle cx="11" cy="11" r="10.8" fill="#3d74bb"/><path d="M7.5 8.2 Q7.5 4.8 11 4.8 Q14.6 4.8 14.6 8 Q14.6 10 12.2 11.2 Q11 11.9 11 13.6" fill="none" stroke="#fff" stroke-width="2.3"/><circle cx="11" cy="17" r="1.5" fill="#fff"/></svg>
<span class="t" id="t55" style="left:122.00px;top:665.24px;font-size:14.60px;color:#56709a;transform:scaleX(1.0459);">Which file do I want to save?</span>
<div class="a" style="left:318px;top:692px;width:60px;height:30px;background:#ffffff;border:1px solid #ababab"></div>
<span class="t" id="t56" style="left:330.30px;top:700.74px;font-size:14.60px;color:#444444;transform:scaleX(0.9514);">Close</span>
<div class="a" style="left:395px;top:303px;width:130px;height:438px;background:#e4e4e4"></div>
<div class="a" style="left:395px;top:303px;width:1.2px;height:435px;background:#d0d0d0"></div>
<div class="a" style="left:500px;top:303px;width:19px;height:434px;background:#dcdcdc"></div>
<div class="a" style="left:524px;top:303px;width:1.2px;height:435px;background:#d0d0d0"></div>
<div class="a" style="left:500px;top:306.5px;width:19px;height:18.5px;background:#fff;border:1px solid #c9c9c9"></div>
<svg style="left:505px;top:312px" width="9" height="6" viewBox="0 0 9 6"><path d="M0 6 H9 L4.5 0 Z" fill="#555"/></svg>
<div class="a" style="left:500px;top:653px;width:19px;height:65px;background:#fff;border:1px solid #cfcfcf"></div>
<div class="a" style="left:500px;top:719.5px;width:19px;height:17.5px;background:#fff;border:1px solid #c9c9c9"></div>
<svg style="left:505px;top:725px" width="9" height="6" viewBox="0 0 9 6"><path d="M0 0 H9 L4.5 6 Z" fill="#555"/></svg>
<div class="a" style="left:431px;top:300px;width:44px;height:4px;background:#fff;border:1px solid #d0d0d0"></div>
<div class="a" style="left:431.5px;top:329.5px;width:43px;height:26px;background:#fff;border:1px solid #d6d6d6;overflow:hidden"><div class="a" style="left:3px;top:3px;width:5px;height:2px;background:#8a90a0"></div><div class="a" style="left:14px;top:3px;width:24px;height:1px;background:#b8bcc8"></div><div class="a" style="left:1px;top:21px;width:39px;height:1.5px;background:#a8d088"></div><div class="a" style="left:25px;top:8px;width:11px;height:10px;background:#b0b6ae;border-radius:2px"></div><div class="a" style="left:12px;top:10px;width:10px;height:5px;background:#f4dede"></div></div>
<span class="t" id="t57" style="left:401.60px;top:328.49px;font-size:19.50px;color:#505050;transform:scaleX(0.9584);">43</span>
<div class="a" style="left:431.5px;top:380.0px;width:43px;height:26px;background:#fff;border:1px solid #d6d6d6;overflow:hidden"><div class="a" style="left:3px;top:3px;width:5px;height:2px;background:#8a90a0"></div><div class="a" style="left:14px;top:3px;width:24px;height:1px;background:#b8bcc8"></div><div class="a" style="left:1px;top:21px;width:39px;height:1.5px;background:#a8d088"></div><div class="a" style="left:4px;top:8px;width:14px;height:1px;background:#c0c0c0"></div><div class="a" style="left:21px;top:9px;width:6px;height:2px;background:#606060"></div><div class="a" style="left:30px;top:14px;width:9px;height:6px;background:#6a74a8"></div><div class="a" style="left:4px;top:14px;width:22px;height:1px;background:#d0d0d0"></div></div>
<span class="t" id="t58" style="left:401.60px;top:378.99px;font-size:19.50px;color:#505050;transform:scaleX(0.9584);">44</span>
<div class="a" style="left:431.5px;top:430.0px;width:43px;height:26px;background:#fff;border:1px solid #d6d6d6;overflow:hidden"><div class="a" style="left:3px;top:3px;width:5px;height:2px;background:#8a90a0"></div><div class="a" style="left:14px;top:3px;width:24px;height:1px;background:#b8bcc8"></div><div class="a" style="left:1px;top:21px;width:39px;height:1.5px;background:#a8d088"></div><div class="a" style="left:3px;top:7px;width:17px;height:12px;background:linear-gradient(#a8d0d0,#98b080)"></div><div class="a" style="left:24px;top:10px;width:12px;height:1px;background:#c8c8c8"></div></div>
<span class="t" id="t59" style="left:401.60px;top:428.99px;font-size:19.50px;color:#505050;transform:scaleX(0.9584);">45</span>
<div class="a" style="left:431.5px;top:480.0px;width:43px;height:26px;background:#fff;border:1px solid #d6d6d6;overflow:hidden"><div class="a" style="left:3px;top:3px;width:5px;height:2px;background:#8a90a0"></div><div class="a" style="left:14px;top:3px;width:24px;height:1px;background:#b8bcc8"></div><div class="a" style="left:1px;top:21px;width:39px;height:1.5px;background:#a8d088"></div><div class="a" style="left:4px;top:9px;width:14px;height:1px;background:#c0c0c0"></div><div class="a" style="left:22px;top:14px;width:14px;height:3px;background:#d8d8e0"></div></div>
<span class="t" id="t60" style="left:401.60px;top:478.99px;font-size:19.50px;color:#505050;transform:scaleX(0.9584);">46</span>
<div class="a" style="left:431.5px;top:580.5px;width:43px;height:26px;background:#fff;border:1px solid #d6d6d6;overflow:hidden"><div class="a" style="left:3px;top:3px;width:5px;height:2px;background:#8a90a0"></div><div class="a" style="left:14px;top:3px;width:24px;height:1px;background:#b8bcc8"></div><div class="a" style="left:1px;top:21px;width:39px;height:1.5px;background:#a8d088"></div><div class="a" style="left:5px;top:8px;width:30px;height:11px;background:repeating-linear-gradient(#b8dca0 0 1.2px,#fff 1.2px 3.2px)"></div></div>
<span class="t" id="t61" style="left:401.60px;top:579.49px;font-size:19.50px;color:#505050;transform:scaleX(0.9584);">48</span>
<div class="a" style="left:431.5px;top:630.5px;width:43px;height:26px;background:#fff;border:1px solid #d6d6d6;overflow:hidden"><div class="a" style="left:3px;top:3px;width:5px;height:2px;background:#8a90a0"></div><div class="a" style="left:14px;top:3px;width:24px;height:1px;background:#b8bcc8"></div><div class="a" style="left:1px;top:21px;width:39px;height:1.5px;background:#a8d088"></div><div class="a" style="left:5px;top:7px;width:30px;height:11px;background:repeating-linear-gradient(#b0d490 0 1.5px,#fff 1.5px 3.3px)"></div></div>
<span class="t" id="t62" style="left:401.60px;top:629.49px;font-size:19.50px;color:#505050;transform:scaleX(0.9584);">49</span>
<div class="a" style="left:431.5px;top:680.5px;width:43px;height:26px;background:#fff;border:1px solid #d6d6d6;overflow:hidden"><div class="a" style="left:3px;top:3px;width:5px;height:2px;background:#8a90a0"></div><div class="a" style="left:14px;top:3px;width:24px;height:1px;background:#b8bcc8"></div><div class="a" style="left:1px;top:21px;width:39px;height:1.5px;background:#a8d088"></div><div class="a" style="left:12px;top:10px;width:20px;height:1px;background:#a0a0a0"></div><div class="a" style="left:14px;top:14px;width:16px;height:2px;background:#b8c898"></div></div>
<span class="t" id="t63" style="left:401.60px;top:679.49px;font-size:19.50px;color:#505050;transform:scaleX(0.9584);">50</span>
<div class="a" style="left:428.5px;top:527.5px;width:48px;height:31px;border:3px solid #c5472c;background:#fff"></div>
<div class="a" style="left:437px;top:533px;width:30px;height:15px;background:#7ab0ea"></div>
<div class="a" style="left:441px;top:536px;width:22px;height:9px;background:#e0d890;opacity:0.7"></div>
<div class="a" style="left:432px;top:551.5px;width:41px;height:2px;background:#a8d088"></div>
<span class="t" id="t64" style="left:402.00px;top:527.29px;font-size:19.50px;color:#c8502e;transform:scaleX(0.9215);">47</span>
<div class="a" style="left:1038.5px;top:324px;width:19px;height:320px;background:#dcdcdc"></div><div class="a" style="left:525px;top:737px;width:533px;height:1px;background:#d4d4d4"></div>
<div class="a" style="left:1038.5px;top:307px;width:19px;height:18px;background:#fff;border:1px solid #c9c9c9"></div>
<svg style="left:1043.5px;top:312.5px" width="9" height="6" viewBox="0 0 9 6"><path d="M0 6 H9 L4.5 0 Z" fill="#555"/></svg>
<div class="a" style="left:1038.5px;top:604px;width:19px;height:22px;background:#fff;border:1px solid #cfcfcf"></div>
<div class="a" style="left:1038.5px;top:643.5px;width:19px;height:18px;background:#fff;border:1px solid #c9c9c9"></div>
<svg style="left:1043.5px;top:650px" width="9" height="6" viewBox="0 0 9 6"><path d="M0 0 H9 L4.5 6 Z" fill="#555"/></svg>
<svg style="left:1043px;top:669px" width="10" height="12" viewBox="0 0 10 12"><path d="M0 5 H10 L5 0 Z M0 11 H10 L5 6 Z" fill="#555"/></svg>
<svg style="left:1043px;top:692px" width="10" height="12" viewBox="0 0 10 12"><path d="M0 0 H10 L5 5 Z M0 6 H10 L5 11 Z" fill="#555"/></svg>
<div class="a" style="left:545px;top:385px;width:475px;height:268px;background:#ffffff;box-shadow:0 0 1px #bbb"></div>
<div class="a" style="left:545px;top:631.5px;width:475px;height:21px;background:#6aab3b"></div>
<div class="a" style="left:591px;top:641px;width:18px;height:1.5px;background:#9cc87a"></div>
<div class="a" style="left:973px;top:641px;width:5px;height:1.5px;background:#9cc87a"></div>
<svg style="left:557px;top:394px" width="68" height="37" viewBox="0 0 68 37">
<circle cx="16.5" cy="15" r="13.2" fill="none" stroke="#2a3050" stroke-width="2.2"/>
<path d="M4 10 Q16 15 29 10 M4 21 Q16 25 29 21 M11 2.5 Q7 15 13 28 M22 2.5 Q26 15 20 28" fill="none" stroke="#3a4060" stroke-width="1.1"/>
<path d="M10 8 L15 17 L21 7" fill="none" stroke="#8090b8" stroke-width="2"/>
<text x="33" y="27.5" font-family="Liberation Sans" font-weight="700" font-size="25" fill="#1a2352" textLength="32" lengthAdjust="spacingAndGlyphs">sdc</text>
<path d="M1 34.5 H64" stroke="#6a6e80" stroke-width="1.8"/>
<path d="M36 12 H62" stroke="#b0b4c0" stroke-width="0.8"/>
</svg>
<svg style="left:967px;top:405px" width="44" height="17" viewBox="0 0 44 17">
<rect x="1" y="0.8" width="11" height="3" rx="1" fill="#1e2448"/>
<rect x="1" y="6.8" width="4" height="9" fill="#1e2448"/><rect x="1" y="6.8" width="8.5" height="2.4" fill="#1e2448"/><rect x="1" y="13" width="11" height="2.8" fill="#1e2448"/>
<rect x="16" y="1" width="3.8" height="2.8" rx="1" fill="#2a5a7a"/><rect x="16" y="6.8" width="3.8" height="9" fill="#2a5a7a"/>
<rect x="24" y="1" width="10.3" height="2.8" rx="1" fill="#1f7fb0"/><rect x="27" y="6.8" width="4" height="9" fill="#1f7fb0"/>
<rect x="38" y="1" width="4" height="2.8" rx="1" fill="#1ab8f0"/><rect x="38" y="6.8" width="4" height="9" fill="#1ab8f0"/>
</svg>
<svg style="left:612.5px;top:430.5px" width="335" height="174" viewBox="0 0 335 174"><defs><clipPath id="qc"><rect width="335" height="174"/></clipPath><pattern id="dots" width="6" height="6" patternUnits="userSpaceOnUse"><circle cx="3" cy="3" r="1.5" fill="#cfe6ff"/></pattern></defs><g clip-path="url(#qc)"><rect width="335" height="174" fill="#62a6ee"/><path d="M0 70 Q30 120 52 174 L0 174 Z" fill="url(#dots)" opacity="0.85"/><path d="M31 0 L56 29" stroke="#1a3d8a" stroke-width="2.2"/><path d="M49 0 L72 26 M64 0 L84 22" stroke="#ffffff" stroke-width="2.2"/><path d="M15 174 L52 143" stroke="#1a3d8a" stroke-width="2.2"/><path d="M38 174 L70 147 M56 174 L84 150" stroke="#ffffff" stroke-width="2.2"/><path d="M95 4 L95 14 L105 9 Z" fill="#f3c64a"/><path d="M109 5 L109 13 L117 9 Z" fill="none" stroke="#f3c64a" stroke-width="1.4"/><path d="M123 4 L123 14 L133 9 Z" fill="#f3c64a"/><path d="M137 5 L137 13 L145 9 Z" fill="none" stroke="#f3c64a" stroke-width="1.4"/><path d="M151 4 L151 14 L161 9 Z" fill="#f3c64a"/><path d="M217 7 L217 17 L227 12 Z" fill="#1f4fa0"/><path d="M231 8 L231 16 L239 12 Z" fill="none" stroke="#1f4fa0" stroke-width="1.4"/><path d="M245 7 L245 17 L255 12 Z" fill="#1f4fa0"/><path d="M259 8 L259 16 L267 12 Z" fill="none" stroke="#1f4fa0" stroke-width="1.4"/><path d="M273 7 L273 17 L283 12 Z" fill="#1f4fa0"/><path d="M297 16.0 L313 1.0 L329 16.0" fill="none" stroke="#ffffff" stroke-width="6.5" stroke-linejoin="miter"/><path d="M297 38.3 L313 23.3 L329 38.3" fill="none" stroke="#ffffff" stroke-width="6.5" stroke-linejoin="miter"/><path d="M297 60.6 L313 45.6 L329 60.6" fill="none" stroke="#ffffff" stroke-width="6.5" stroke-linejoin="miter"/><path d="M297 82.9 L313 67.9 L329 82.9" fill="none" stroke="#ffffff" stroke-width="6.5" stroke-linejoin="miter"/><path d="M297 105.2 L313 90.2 L329 105.2" fill="none" stroke="#ffffff" stroke-width="6.5" stroke-linejoin="miter"/><path d="M297 127.5 L313 112.5 L329 127.5" fill="none" stroke="#ffffff" stroke-width="6.5" stroke-linejoin="miter"/><path d="M297 149.8 L313 134.8 L329 149.8" fill="none" stroke="#ffffff" stroke-width="6.5" stroke-linejoin="miter"/><path d="M297 172.1 L313 157.1 L329 172.1" fill="none" stroke="#ffffff" stroke-width="6.5" stroke-linejoin="miter"/><circle cx="190" cy="4" r="1.3" fill="#ffffff"/><circle cx="198" cy="4" r="1.3" fill="#ffffff"/><circle cx="206" cy="4" r="1.3" fill="#ffffff"/><circle cx="214" cy="4" r="1.3" fill="#ffffff"/><circle cx="225" cy="27" r="1.3" fill="#ffffff"/><circle cx="246" cy="24" r="1.3" fill="#ffffff"/><circle cx="300" cy="38" r="1.3" fill="#ffffff"/><circle cx="288" cy="108" r="1.3" fill="#ffffff"/><circle cx="195" cy="160" r="1.3" fill="#ffffff"/><circle cx="230" cy="158" r="1.3" fill="#ffffff"/><circle cx="110" cy="166" r="1.3" fill="#ffffff"/><path d="M108 14 L139 10 L145 64 L110 66 Z" fill="#d0505a"/><path d="M218 16 L234 18 L230 66 L214 64 Z" fill="#d0505a"/><path d="M240 46 L282 40 L294 92 L268 100 L278 146 L224 160 L170 167 L120 170 L56 150 L60 98 L240 95 Z" fill="#d0505a"/><rect x="51.0" y="21.0" width="42.0" height="46.0" fill="#f6d950" transform="rotate(12.0 72.0 44.0)"/><g transform="translate(72.0 45.0) rotate(12.0) scale(0.96)"><path d="M-7 -9 Q-7 -16 0 -16 Q7 -16 7 -10 Q7 -5 1 -1.5 Q-1 0.5 0 7" fill="none" stroke="#555555" stroke-width="1.2"/><circle cx="0" cy="12" r="1.3" fill="none" stroke="#555555" stroke-width="0.9"/></g><rect x="92.0" y="12.0" width="44.0" height="52.0" fill="#62c4ea" transform="rotate(-5.0 114.0 38.0)"/><g transform="translate(114.0 39.0) rotate(-5.0) scale(1.08)"><path d="M-7 -9 Q-7 -16 0 -16 Q7 -16 7 -10 Q7 -5 1 -1.5 Q-1 0.5 0 7" fill="none" stroke="#555555" stroke-width="1.2"/><circle cx="0" cy="12" r="1.3" fill="none" stroke="#555555" stroke-width="0.9"/></g><rect x="134.0" y="12.5" width="46.0" height="41.0" fill="#98d6a8" transform="rotate(16.0 157.0 33.0)"/><g transform="translate(157.0 34.0) rotate(16.0) scale(0.85)"><path d="M-7 -9 Q-7 -16 0 -16 Q7 -16 7 -10 Q7 -5 1 -1.5 Q-1 0.5 0 7" fill="none" stroke="#555555" stroke-width="1.2"/><circle cx="0" cy="12" r="1.3" fill="none" stroke="#555555" stroke-width="0.9"/></g><rect x="179.0" y="14.0" width="46.0" height="50.0" fill="#f8d854" transform="rotate(4.0 202.0 39.0)"/><g transform="translate(202.0 40.0) rotate(4.0) scale(1.04)"><path d="M-7 -9 Q-7 -16 0 -16 Q7 -16 7 -10 Q7 -5 1 -1.5 Q-1 0.5 0 7" fill="none" stroke="#555555" stroke-width="1.2"/><circle cx="0" cy="12" r="1.3" fill="none" stroke="#555555" stroke-width="0.9"/></g><rect x="233.0" y="43.0" width="40.0" height="46.0" fill="#f1bfa8" transform="rotate(-18.0 253.0 66.0)"/><g transform="translate(253.0 67.0) rotate(-18.0) scale(0.96)"><path d="M-7 -9 Q-7 -16 0 -16 Q7 -16 7 -10 Q7 -5 1 -1.5 Q-1 0.5 0 7" fill="none" stroke="#555555" stroke-width="1.2"/><circle cx="0" cy="12" r="1.3" fill="none" stroke="#555555" stroke-width="0.9"/></g><rect x="68" y="61" width="182" height="41" fill="#f8f8f8" transform="rotate(-1.5 159 81)"/><g transform="rotate(-2.8 101 86)" fill="none" stroke="#3a3a3a" stroke-width="1.5" stroke-linecap="round" stroke-linejoin="round"><path transform="translate(101.0 76.5)" d="M6 0.5 C1.5 0.5 0.5 5 0.5 10 C0.5 15.5 2.5 19.5 6 19.5 C9.5 19.5 11.5 15 11.5 10 C11.5 4.5 10 0.5 6 0.5 Z M7 14 L12.5 21"/><path transform="translate(114.6 76.5)" d="M0.5 0.5 V13.5 Q0.5 19.5 6 19.5 Q11.5 19.5 11.5 13.5 V0.5"/><path transform="translate(128.2 76.5)" d="M11 0.8 H1 V19.3 H11 M1 10 H9"/><path transform="translate(141.8 76.5)" d="M10.5 3 Q9 0.5 6 0.5 Q1.5 0.5 1.5 5 Q1.5 9 6 10 Q10.8 11 10.8 15 Q10.8 19.5 6 19.5 Q2 19.5 0.5 16.5"/><path transform="translate(155.4 76.5)" d="M0 1 H12 M6 1 V19.5"/><path transform="translate(169.0 76.5)" d="M1 0.8 H9 M5 0.8 V19.3 M1 19.3 H9"/><path transform="translate(182.6 76.5)" d="M6 0.5 C1.5 0.5 0.5 5 0.5 10 C0.5 15.5 2.5 19.5 6 19.5 C9.5 19.5 11.5 15 11.5 10 C11.5 4.5 10 0.5 6 0.5 Z"/><path transform="translate(196.2 76.5)" d="M0.8 19.5 V0.5 L11.2 19.5 V0.5"/><path transform="translate(209.8 76.5)" d="M10.5 3 Q9 0.5 6 0.5 Q1.5 0.5 1.5 5 Q1.5 9 6 10 Q10.8 11 10.8 15 Q10.8 19.5 6 19.5 Q2 19.5 0.5 16.5"/></g><rect x="105" y="106" width="55" height="14" fill="#b07a56"/><rect x="50.0" y="93.5" width="50.0" height="55.0" fill="#98d6a8" transform="rotate(3.0 75.0 121.0)"/><g transform="translate(75.0 122.0) rotate(3.0) scale(1.15)"><path d="M-7 -9 Q-7 -16 0 -16 Q7 -16 7 -10 Q7 -5 1 -1.5 Q-1 0.5 0 7" fill="none" stroke="#555555" stroke-width="1.2"/><circle cx="0" cy="12" r="1.3" fill="none" stroke="#555555" stroke-width="0.9"/></g><rect x="98.5" y="102.0" width="33.0" height="52.0" fill="#f1bfa8" transform="rotate(-5.0 115.0 128.0)"/><g transform="translate(115.0 129.0) rotate(-5.0) scale(1.08)"><path d="M-7 -9 Q-7 -16 0 -16 Q7 -16 7 -10 Q7 -5 1 -1.5 Q-1 0.5 0 7" fill="none" stroke="#555555" stroke-width="1.2"/><circle cx="0" cy="12" r="1.3" fill="none" stroke="#555555" stroke-width="0.9"/></g><rect x="153.0" y="97.0" width="46.0" height="50.0" fill="#62c4ea" transform="rotate(0.0 176.0 122.0)"/><g transform="translate(176.0 123.0) rotate(0.0) scale(1.04)"><path d="M-7 -9 Q-7 -16 0 -16 Q7 -16 7 -10 Q7 -5 1 -1.5 Q-1 0.5 0 7" fill="none" stroke="#555555" stroke-width="1.2"/><circle cx="0" cy="12" r="1.3" fill="none" stroke="#555555" stroke-width="0.9"/></g><rect x="211.0" y="91.0" width="50.0" height="54.0" fill="#f8e060" transform="rotate(-12.0 236.0 118.0)"/><g transform="translate(236.0 119.0) rotate(-12.0) scale(1.12)"><path d="M-7 -9 Q-7 -16 0 -16 Q7 -16 7 -10 Q7 -5 1 -1.5 Q-1 0.5 0 7" fill="none" stroke="#555555" stroke-width="1.2"/><circle cx="0" cy="12" r="1.3" fill="none" stroke="#555555" stroke-width="0.9"/></g><rect x="193.0" y="111.5" width="38.0" height="55.0" fill="#f1bfa8" transform="rotate(8.0 212.0 139.0)"/><g transform="translate(212.0 140.0) rotate(8.0) scale(1.15)"><path d="M-7 -9 Q-7 -16 0 -16 Q7 -16 7 -10 Q7 -5 1 -1.5 Q-1 0.5 0 7" fill="none" stroke="#555555" stroke-width="1.2"/><circle cx="0" cy="12" r="1.3" fill="none" stroke="#555555" stroke-width="0.9"/></g><rect x="121.0" y="118.5" width="46.0" height="53.0" fill="#f8dc58" transform="rotate(-3.0 144.0 145.0)"/><g transform="translate(144.0 146.0) rotate(-3.0) scale(1.10)"><path d="M-7 -9 Q-7 -16 0 -16 Q7 -16 7 -10 Q7 -5 1 -1.5 Q-1 0.5 0 7" fill="none" stroke="#555555" stroke-width="1.2"/><circle cx="0" cy="12" r="1.3" fill="none" stroke="#555555" stroke-width="0.9"/></g><circle cx="90" cy="26" r="2.8" fill="#f3d24a"/><circle cx="131" cy="37" r="2.8" fill="#c0302a"/><circle cx="157" cy="63" r="2.8" fill="#1f4fa0"/><circle cx="185" cy="28" r="2.8" fill="#f3d24a"/><circle cx="248" cy="44" r="2.8" fill="#c0302a"/><circle cx="250" cy="93" r="2.8" fill="#30a050"/><circle cx="101" cy="106" r="2.8" fill="#f3d24a"/><circle cx="134" cy="119" r="2.8" fill="#c0302a"/><circle cx="198" cy="118" r="2.8" fill="#f3d24a"/><circle cx="290" cy="107" r="2.8" fill="#f3d24a"/><circle cx="264" cy="172" r="2.8" fill="#1f4fa0"/><circle cx="203" cy="172" r="2.8" fill="#1f4fa0"/></g></svg>
<div class="a" style="left:74px;top:739.5px;width:984px;height:30px;background:#f0eff2;border-top:1.5px solid #d2d2d4"></div>
<div class="a" style="left:72px;top:769.5px;width:988px;height:2px;background:#b24a36"></div>
<span class="t" id="t65" style="left:84.90px;top:747.02px;font-size:14.50px;color:#5a5a5c;transform:scaleX(1.0148);">Slide 47 of 50</span>
<svg style="left:200px;top:746px" width="20" height="17" viewBox="0 0 20 17"><path d="M1 1 H8 Q10 1 10 3 V16 Q10 14 8 14 H1 Z" fill="none" stroke="#666" stroke-width="1.3"/><path d="M10 3 Q10 1 12 1" fill="none" stroke="#666" stroke-width="1.3"/><path d="M12 6 L18 13 M18 6 L12 13" stroke="#666" stroke-width="1.4"/><path d="M11 15.5 H19" stroke="#666" stroke-width="1.2"/></svg>
<span class="t" id="t66" style="left:245.30px;top:748.12px;font-size:14.50px;color:#5a5a5c;transform:scaleX(0.9811);">Recovered</span>
<svg style="left:379px;top:747px" width="15" height="17" viewBox="0 0 15 17"><path d="M4 4.5 L7.5 0.5 L11 4.5 Z" fill="#666"/><path d="M1 7.5 H14 M1 10.5 H14 M1 13.5 H14 M3 16.3 H12" stroke="#666" stroke-width="1.3"/></svg>
<span class="t" id="t67" style="left:401.00px;top:748.22px;font-size:14.50px;color:#5a5a5c;transform:scaleX(1.0187);">Notes</span>
<svg style="left:467.5px;top:747.5px" width="16" height="16" viewBox="0 0 16 16"><path d="M0.5 0.5 H15.5 V11 H8 L4.5 15 V11 H0.5 Z" fill="#666"/></svg>
<span class="t" id="t68" style="left:489.40px;top:748.22px;font-size:14.50px;color:#5a5a5c;">Comments</span>
<div class="a" style="left:585px;top:742px;width:50px;height:27.5px;background:#c9c9cb"></div>
<svg style="left:600px;top:745px" width="20" height="18" viewBox="0 0 20 18"><rect x="0.7" y="0.7" width="18.6" height="16.6" fill="none" stroke="#666" stroke-width="1.4"/><path d="M5 1 V17 M5 12 H19" stroke="#666" stroke-width="1.3"/><rect x="8" y="4" width="8" height="5" fill="none" stroke="#666" stroke-width="1.2"/></svg>
<svg style="left:650.5px;top:746px" width="20" height="17" viewBox="0 0 20 17"><rect x="0.7" y="0.7" width="7.5" height="6.5" fill="none" stroke="#666" stroke-width="1.3"/><rect x="11.5" y="0.7" width="7.5" height="6.5" fill="none" stroke="#666" stroke-width="1.3"/><rect x="0.7" y="9.8" width="7.5" height="6.5" fill="none" stroke="#666" stroke-width="1.3"/><rect x="11.5" y="9.8" width="7.5" height="6.5" fill="none" stroke="#666" stroke-width="1.3"/></svg>
<svg style="left:700.5px;top:746px" width="18" height="17" viewBox="0 0 18 17"><path d="M1 1.5 Q5 0.5 9 2 Q13 0.5 17 1.5 V15 Q13 14 9 15.5 Q5 14 1 15 Z M9 2 V15.5" fill="none" stroke="#666" stroke-width="1.3"/><path d="M3 5 H7 M3 8 H7 M3 11 H7 M11 5 H15 M11 8 H15 M11 11 H15" stroke="#888" stroke-width="1"/></svg>
<svg style="left:751.5px;top:746.5px" width="17" height="17" viewBox="0 0 17 17"><path d="M0.5 1 H16.5" stroke="#666" stroke-width="1.6"/><path d="M2 2 V9 H15 V2" fill="none" stroke="#666" stroke-width="1.4"/><path d="M8.5 9 V15 M5 15.8 H12" stroke="#666" stroke-width="1.5"/></svg>
<div class="a" style="left:791.5px;top:754px;width:8px;height:2px;background:#555"></div>
<div class="a" style="left:805.5px;top:754.5px;width:131px;height:1px;background:#8a8a8c"></div>
<div class="a" style="left:871px;top:751.5px;width:1px;height:7px;background:#9a9a9c"></div>
<div class="a" style="left:819.5px;top:748px;width:5.5px;height:14px;background:#555"></div>
<svg style="left:941.5px;top:749.5px" width="11" height="11" viewBox="0 0 11 11"><path d="M0 5.5 H11 M5.5 0 V11" stroke="#555" stroke-width="2"/></svg>
<span class="t" id="t69" style="left:974.40px;top:747.42px;font-size:14.50px;color:#6a6a6c;transform:scaleX(0.9231);">29%</span>
<svg style="left:1018.5px;top:747px" width="18" height="17" viewBox="0 0 18 17"><rect x="0.7" y="0.7" width="16.6" height="15.6" fill="none" stroke="#666" stroke-width="1.4"/><path d="M9 2 V6 M7 4.5 L9 6.5 L11 4.5 M9 15 V11 M7 12.5 L9 10.5 L11 12.5 M2 8.5 H6 M4.5 6.5 L6.5 8.5 L4.5 10.5 M16 8.5 H12 M13.5 6.5 L11.5 8.5 L13.5 10.5" fill="none" stroke="#666" stroke-width="1.1"/></svg>
<div class="a" style="left:1148px;top:0;width:376px;height:768px;background:#ffffff;border-radius:9px 0 0 10px;overflow:hidden">
<div class="a" style="left:4px;top:5px;width:372px;height:44px;background:#f0f1f5"></div>
</div>
<div class="a" style="left:1160.5px;top:11px;width:32px;height:32px;background:#0e71eb;border-radius:8px"></div>
<svg style="left:1167px;top:17px" width="20" height="20" viewBox="0 0 20 20"><path d="M9 3.5 H5.5 Q3 3.5 3 6 V14.5 Q3 17 5.5 17 H13.5 Q16 17 16 14.5 V11" fill="none" stroke="#ffffff" stroke-width="1.6" stroke-linecap="round"/><path d="M8.5 12 L9 9.3 L15 3.3 Q16 2.3 17 3.3 Q18 4.3 17 5.3 L11 11.3 Z" fill="none" stroke="#ffffff" stroke-width="1.5" stroke-linejoin="round"/></svg>
<span class="t" id="t70" style="left:1200.90px;top:20.62px;font-size:13.20px;color:#1f1f25;font-weight:700;transform:scaleX(0.9735);">One-Day Online Training Workshop o...</span>
<svg style="left:1450px;top:25px" width="13" height="4" viewBox="0 0 13 4"><circle cx="1.7" cy="2" r="1.5" fill="#555"/><circle cx="6.5" cy="2" r="1.5" fill="#555"/><circle cx="11.3" cy="2" r="1.5" fill="#555"/></svg>
<svg style="left:1476px;top:19.5px" width="15" height="15" viewBox="0 0 15 15"><path d="M6 1.5 H3.5 Q1.2 1.5 1.2 3.8 V11.5 Q1.2 13.8 3.5 13.8 H11.2 Q13.5 13.8 13.5 11.5 V9" fill="none" stroke="#555" stroke-width="1.5"/><path d="M8.5 1 H14 V6.5 M14 1 L7.5 7.5" fill="none" stroke="#555" stroke-width="1.5"/></svg>
<svg style="left:1504px;top:22px" width="11" height="11" viewBox="0 0 11 11"><path d="M0.5 0.5 L10.5 10.5 M10.5 0.5 L0.5 10.5" stroke="#555" stroke-width="1.4"/></svg>
<div class="a" style="left:1517px;top:49px;width:7px;height:570px;background:#f3f3f5"></div>
<div class="a" style="left:1517.5px;top:527px;width:6px;height:92px;background:#a6a6aa;border-radius:3px"></div>
<span class="t" id="t71" style="left:1203.00px;top:50.36px;font-size:12.80px;color:#3b7fd9;transform:scaleX(0.9542);">Eralda Lameborshi</span><span class="t" id="t72" style="left:1310.60px;top:50.36px;font-size:12.80px;color:#8a8a90;transform:scaleX(0.8517);">3:19 PM</span>
<div class="a" style="left:1165px;top:66.0px;width:24px;height:24px;border-radius:12px;background:#cc4431"></div><span class="t" id="t73" style="left:1165.00px;top:71.37px;font-size:13.50px;color:#ffffff;width:24px;text-align:center;">EL</span>
<div class="a" style="left:1196.3px;top:65.6px;width:272.4px;height:118.4px;background:#f2f2f6;border-radius:13px"></div>
<span class="t" id="t74" style="left:1206.50px;top:76.85px;font-size:15.30px;color:#1d1d1f;transform:scaleX(0.9885);">A eshte e qendrueshme ideje e</span>
<span class="t" id="t75" style="left:1206.50px;top:96.55px;font-size:15.30px;color:#1d1d1f;">makinave dhe transportit elektrik ne</span>
<span class="t" id="t76" style="left:1206.50px;top:116.25px;font-size:15.30px;color:#1d1d1f;transform:scaleX(1.0032);">rang global, duke konsideruar</span>
<span class="t" id="t77" style="left:1206.50px;top:135.95px;font-size:15.30px;color:#1d1d1f;transform:scaleX(1.0038);">nevojen per materiale te rralla ne</span>
<span class="t" id="t78" style="left:1206.50px;top:155.65px;font-size:15.30px;color:#1d1d1f;transform:scaleX(1.0032);">ndertimin e tyre?</span>
<span class="t" id="t79" style="left:1203.00px;top:196.06px;font-size:12.80px;color:#3b7fd9;transform:scaleX(0.9953);">Donald Murati</span><span class="t" id="t80" style="left:1287.20px;top:196.06px;font-size:12.80px;color:#8a8a90;transform:scaleX(0.8559);">3:20 PM</span>
<div class="a" style="left:1165px;top:212.0px;width:24px;height:24px;border-radius:12px;background:#1f4a55"></div><svg style="left:1165px;top:212.0px" width="24" height="24" viewBox="0 0 24 24"><defs><radialGradient id="dmg" cx="0.4" cy="0.4" r="0.7"><stop offset="0" stop-color="#3d8a9a"/><stop offset="1" stop-color="#123d4a"/></radialGradient></defs><circle cx="12" cy="12" r="12" fill="url(#dmg)"/><path d="M10 4 Q13 8 11 12 Q9 16 12 20 M14 6 Q16 10 14 14" stroke="#0a1c22" stroke-width="1.5" fill="none"/></svg>
<div class="a" style="left:1196.3px;top:212.0px;width:157.3px;height:38.3px;background:#f2f2f6;border-radius:13px"></div>
<span class="t" id="t81" style="left:1206.50px;top:222.25px;font-size:15.30px;color:#1d1d1f;transform:scaleX(1.0053);">Shume faleminderit</span>
<span class="t" id="t82" style="left:1203.00px;top:262.56px;font-size:12.80px;color:#3b7fd9;transform:scaleX(0.9491);">Besmir Geziqi</span><span class="t" id="t83" style="left:1283.00px;top:262.56px;font-size:12.80px;color:#8a8a90;transform:scaleX(0.8663);">3:21 PM</span>
<div class="a" style="left:1165px;top:278.7px;width:24px;height:24px;border-radius:12px;background:#8e46b4"></div><span class="t" id="t84" style="left:1165.00px;top:284.07px;font-size:13.50px;color:#ffffff;width:24px;text-align:center;">BG</span>
<div class="a" style="left:1196.3px;top:278.0px;width:272.4px;height:78.7px;background:#f2f2f6;border-radius:13px"></div>
<span class="t" id="t85" style="left:1206.50px;top:288.35px;font-size:15.30px;color:#1d1d1f;transform:scaleX(0.9925);">e drejte: feasibility study eshte bere</span>
<span class="t" id="t86" style="left:1206.50px;top:308.25px;font-size:15.30px;color:#1d1d1f;transform:scaleX(1.0142);">dhe projekti po hehen ne</span>
<span class="t" id="t87" style="left:1206.50px;top:328.15px;font-size:15.30px;color:#1d1d1f;transform:scaleX(0.9786);">bashkepunim mes dy shteteve</span>
<div class="a" style="left:1196.3px;top:359.4px;width:208.7px;height:37.6px;background:#f2f2f6;border-radius:13px"></div>
<span class="t" id="t88" style="left:1206.50px;top:369.05px;font-size:15.30px;color:#1d1d1f;transform:scaleX(0.9722);">ne vijim te projektit te BESS</span>
<div class="a" style="left:1196.3px;top:400.2px;width:272.4px;height:57.8px;background:#f2f2f6;border-radius:13px"></div>
<span class="t" id="t89" style="left:1206.50px;top:410.15px;font-size:15.30px;color:#1d1d1f;transform:scaleX(1.0092);">por te falenderoj shume per</span>
<span class="t" id="t90" style="left:1206.50px;top:429.75px;font-size:15.30px;color:#1d1d1f;transform:scaleX(1.0325);">pergjigjen</span>
<span class="t" id="t91" style="left:1203.00px;top:470.76px;font-size:12.80px;color:#3b7fd9;transform:scaleX(0.9368);">Ergys Sterjo</span><span class="t" id="t92" style="left:1272.30px;top:470.76px;font-size:12.80px;color:#8a8a90;transform:scaleX(0.8642);">3:24 PM</span>
<div class="a" style="left:1165px;top:487.0px;width:24px;height:24px;border-radius:12px;background:#1f9e7c"></div><span class="t" id="t93" style="left:1165.00px;top:492.37px;font-size:13.50px;color:#ffffff;width:24px;text-align:center;">ES</span>
<div class="a" style="left:1196.3px;top:486.4px;width:239.3px;height:38.1px;background:#f2f2f6;border-radius:13px"></div>
<span class="t" id="t94" style="left:1206.50px;top:496.85px;font-size:15.30px;color:#1d1d1f;transform:scaleX(1.0054);">Shume faleminderit per trajnim.</span>
<span class="t" id="t95" style="left:1203.00px;top:537.26px;font-size:12.80px;color:#3b7fd9;transform:scaleX(0.9572);">Samsung SM-A025F</span><span class="t" id="t96" style="left:1321.50px;top:537.26px;font-size:12.80px;color:#8a8a90;transform:scaleX(0.8579);">3:24 PM</span>
<div class="a" style="left:1165px;top:552.8px;width:24px;height:24px;border-radius:12px;background:#1f9e7c"></div><span class="t" id="t97" style="left:1165.00px;top:558.17px;font-size:13.50px;color:#ffffff;width:24px;text-align:center;">SS</span>
<div class="a" style="left:1196.3px;top:552.2px;width:218.6px;height:38.2px;background:#f2f2f6;border-radius:13px"></div>
<span class="t" id="t98" style="left:1206.50px;top:562.75px;font-size:15.30px;color:#1d1d1f;transform:scaleX(1.0225);">faleminderit për prezantimin</span>
<svg style="left:1203.5px;top:599px" width="17" height="15" viewBox="0 0 17 15"><path d="M10 2.5 H3 Q1 2.5 1 4.5 V9.5 Q1 11.5 3 11.5 H4 V14 L7 11.5 H11 Q13 11.5 13 9.5 V7" fill="none" stroke="#666" stroke-width="1.2" stroke-linejoin="round"/><path d="M14 0.5 V5.5 M11.5 3 H16.5" stroke="#666" stroke-width="1.2"/></svg>
<svg style="left:1228px;top:599px" width="16" height="15" viewBox="0 0 16 15"><path d="M11.5 4 A6 6 0 1 1 8 2.1" fill="none" stroke="#666" stroke-width="1.2"/><circle cx="5" cy="7" r="0.9" fill="#666"/><circle cx="8.6" cy="7" r="0.9" fill="#666"/><path d="M4 9.5 Q6.8 12.5 9.6 9.5" fill="none" stroke="#666" stroke-width="1.2"/><path d="M13 0.5 V5 M10.8 2.8 H15.2" stroke="#666" stroke-width="1.2"/></svg>
<svg style="left:1254px;top:604.5px" width="11" height="3" viewBox="0 0 11 3"><circle cx="1.3" cy="1.5" r="1.1" fill="#555"/><circle cx="5.5" cy="1.5" r="1.1" fill="#555"/><circle cx="9.7" cy="1.5" r="1.1" fill="#555"/></svg>
<div class="a" style="left:1152.5px;top:619.5px;width:371.5px;height:24px;background:#f0f1f5"></div>
<svg style="left:1217px;top:624.5px" width="15" height="14" viewBox="0 0 15 14"><circle cx="6" cy="3.5" r="2.8" fill="none" stroke="#6e6e74" stroke-width="1.1"/><path d="M0.8 13 Q0.8 8 6 8 Q7 8 8 8.3" fill="none" stroke="#6e6e74" stroke-width="1.1"/><path d="M8.5 8.5 L11.5 7.5 L14.5 8.5 V11 Q14.5 13 11.5 14 Q8.5 13 8.5 11 Z" fill="#1a66e0"/></svg>
<span class="t" id="t99" style="left:1235.50px;top:625.02px;font-size:13.20px;color:#6e6e76;transform:scaleX(0.8805);">Who can see your messages? Recording on</span>
<span class="t" id="t100" style="left:1160.80px;top:653.88px;font-size:16.20px;color:#8a8a92;transform:scaleX(0.9139);">Message everyone</span>
<svg style="left:1167.5px;top:738.5px" width="13" height="13" viewBox="0 0 13 13"><path d="M1 2 V0.8 H12 V2 M6.5 0.8 V12.2 M4.3 12.2 H8.7" fill="none" stroke="#777" stroke-width="1.2"/></svg>
<svg style="left:1200px;top:738px" width="15" height="15" viewBox="0 0 15 15"><circle cx="7.5" cy="7.5" r="6.6" fill="none" stroke="#777" stroke-width="1.2"/><circle cx="5.2" cy="6" r="0.9" fill="#777"/><circle cx="9.8" cy="6" r="0.9" fill="#777"/><path d="M4.3 9 Q7.5 12 10.7 9" fill="none" stroke="#777" stroke-width="1.2"/></svg>
<svg style="left:1233.5px;top:738px" width="13" height="15" viewBox="0 0 13 15"><path d="M1 3 Q1 0.8 3 0.8 H8 L12 4.8 V12 Q12 14.2 10 14.2 H3 Q1 14.2 1 12 Z" fill="none" stroke="#777" stroke-width="1.2"/></svg>
<svg style="left:1265.5px;top:738px" width="16" height="15" viewBox="0 0 16 15"><path d="M9 12.5 H3 Q1 12.5 1 10.5 V3 Q1 1 3 1 H10.5 Q12.5 1 12.5 3 V8" fill="none" stroke="#777" stroke-width="1.2"/><path d="M12.5 9.5 V14.5 M10 12 H15" stroke="#777" stroke-width="1.2"/></svg>
<svg style="left:1294px;top:743px" width="8" height="5" viewBox="0 0 8 5"><path d="M0.8 0.8 L4 4 L7.2 0.8" fill="none" stroke="#777" stroke-width="1.2"/></svg>
<div class="a" style="left:1495px;top:733px;width:24px;height:24px;background:#f0f0f4;border-radius:6px"></div>
<svg style="left:1499px;top:738.5px" width="15" height="13" viewBox="0 0 15 13"><path d="M0.5 0.5 L14.5 2 L6 12.5 L5.5 7 Z" fill="#8a8a90"/><path d="M5.5 7 L14.5 2" stroke="#f0f0f4" stroke-width="1"/></svg>
<div class="a" style="left:0;top:771px;width:1524px;height:47px;background:#1d1d1d"></div>
<div class="a" style="left:0;top:771.8px;width:1524px;height:1.3px;background:#dcdcdc"></div>
<svg style="left:13px;top:779px" width="27" height="28" viewBox="0 0 27 28"><defs><linearGradient id="sun" x1="0" y1="0" x2="1" y2="1"><stop offset="0" stop-color="#ffc83a"/><stop offset="1" stop-color="#f5801e"/></linearGradient></defs><circle cx="11" cy="17" r="10.3" fill="url(#sun)"/><circle cx="18.5" cy="7.5" r="7.5" fill="#d42a22"/></svg>
<span class="t" id="t101" style="left:28.20px;top:782.31px;font-size:10.50px;color:#ffffff;transform:scaleX(0.8556);">7</span>
<span class="t" id="t102" style="left:44.10px;top:782.46px;font-size:12.80px;color:#ffffff;transform:scaleX(0.8568);">37°C</span>
<span class="t" id="t103" style="left:44.10px;top:797.76px;font-size:12.80px;color:#d0d0d0;transform:scaleX(0.9009);">Sunny</span>
<svg style="left:396px;top:785.5px" width="24" height="24" viewBox="0 0 24 24"><defs><linearGradient id="win" x1="0" y1="0" x2="1" y2="1"><stop offset="0" stop-color="#52c6fa"/><stop offset="1" stop-color="#0f8de4"/></linearGradient></defs><rect x="0" y="0" width="11.3" height="11.3" rx="1" fill="url(#win)"/><rect x="12.7" y="0" width="11.3" height="11.3" rx="1" fill="url(#win)"/><rect x="0" y="12.7" width="11.3" height="11.3" rx="1" fill="url(#win)"/><rect x="12.7" y="12.7" width="11.3" height="11.3" rx="1" fill="url(#win)"/></svg>
<div class="a" style="left:433.5px;top:781.5px;width:219.5px;height:31px;background:#f0f0f0;border-radius:16px"></div>
<svg style="left:444px;top:790px" width="16" height="15" viewBox="0 0 16 15"><circle cx="6.5" cy="6.3" r="5.3" fill="none" stroke="#222" stroke-width="1.8"/><path d="M10.3 10 L14.8 14.3" stroke="#222" stroke-width="2"/></svg>
<span class="t" id="t104" style="left:469.80px;top:790.50px;font-size:15.00px;color:#5a5a5a;transform:scaleX(0.8647);">Search</span>
<svg style="left:605px;top:786px" width="44" height="23" viewBox="0 0 44 23"><circle cx="6" cy="4" r="1.6" fill="#f08a70"/><path d="M4 17 L6 20 L8 17 L6 14 Z M2 17 H10 M6 13 V21" stroke="#b070d8" stroke-width="1.6"/><ellipse cx="20" cy="11" rx="9" ry="7.5" fill="#f08866"/><path d="M14 9 Q18 6 22 9 M17 13 Q21 11 25 14" stroke="#d85a44" stroke-width="1" fill="none"/><path d="M19 17 L20 22" stroke="#d06aa0" stroke-width="2"/><path d="M37 6 L38.5 10 L42.5 10.5 L39.5 13 L40.5 17 L37 14.8 L33.5 17 L34.5 13 L31.5 10.5 L35.5 10 Z" fill="#e070c8"/><circle cx="37" cy="12" r="1.5" fill="#f0d040"/></svg>
<svg style="left:666.5px;top:785px" width="26" height="24" viewBox="0 0 26 24"><rect x="0.5" y="7" width="17" height="16" rx="2" fill="#5e5e5e"/><rect x="8" y="0.5" width="17.5" height="16" rx="2" fill="#e8e8e8"/></svg>
<svg style="left:710px;top:784px" width="26" height="26" viewBox="0 0 26 26"><defs><linearGradient id="edg" x1="0" y1="0" x2="1" y2="1"><stop offset="0" stop-color="#36c0f0"/><stop offset="0.5" stop-color="#1e7fd8"/><stop offset="1" stop-color="#1050a8"/></linearGradient><linearGradient id="edg2" x1="0" y1="0" x2="1" y2="0"><stop offset="0" stop-color="#50c878"/><stop offset="1" stop-color="#8ee060"/></linearGradient></defs><circle cx="13" cy="13" r="12.5" fill="url(#edg)"/><path d="M2 11 Q4 2 13 1.5 Q23 1.5 25 11 Q25 15 21 15.5 H11 Q12 21 19 21.5 Q15 25 11 24.5" fill="url(#edg2)" opacity="0.85"/><path d="M9 14 Q9 9 14 9 Q18 9 19 12 H11 Z" fill="#1a5fb8"/></svg>
<div class="a" style="left:719px;top:812.5px;width:7px;height:3px;background:#a0a0a0;border-radius:2px"></div>
<svg style="left:754.5px;top:786px" width="26" height="22" viewBox="0 0 26 22"><path d="M0.5 2 Q0.5 0.5 2 0.5 H9 L11.5 3 H24 Q25.5 3 25.5 4.5 V20 Q25.5 21.5 24 21.5 H2 Q0.5 21.5 0.5 20 Z" fill="#f2b92e"/><rect x="0.5" y="6" width="25" height="15.5" rx="1.5" fill="#fcd45a"/><rect x="6" y="15" width="14" height="4" rx="1" fill="#1a78d4"/></svg>
<div class="a" style="left:764px;top:812.5px;width:6px;height:3px;background:#a0a0a0;border-radius:2px"></div>
<svg style="left:799px;top:785px" width="24" height="24" viewBox="0 0 24 24"><path d="M7 6 V3.5 Q7 1 9.5 1 H14.5 Q17 1 17 3.5 V6" fill="none" stroke="#3aa0e8" stroke-width="1.8"/><rect x="0.5" y="5.5" width="23" height="18" rx="3" fill="#f4f4f4"/><rect x="7" y="10" width="4.5" height="4.5" fill="#f25022"/><rect x="12.5" y="10" width="4.5" height="4.5" fill="#7fba00"/><rect x="7" y="15.5" width="4.5" height="4.5" fill="#00a4ef"/><rect x="12.5" y="15.5" width="4.5" height="4.5" fill="#ffb900"/></svg>
<svg style="left:843.5px;top:784.5px" width="25" height="24" viewBox="0 0 25 24"><path d="M1 0.5 H24 L17 11 H8 Z" fill="#3c7ee0"/><path d="M6 0.5 H19 L15 8 H10 Z" fill="#a8c8f0"/><circle cx="12.5" cy="16.5" r="7" fill="#f5a030"/><circle cx="12.5" cy="16.5" r="5" fill="#fbb848"/></svg>
<svg style="left:888px;top:786px" width="24" height="22" viewBox="0 0 24 22"><defs><linearGradient id="cp1" x1="0" y1="0" x2="0" y2="1"><stop offset="0" stop-color="#2aa8f8"/><stop offset="0.55" stop-color="#3cc870"/><stop offset="1" stop-color="#f8d030"/></linearGradient><linearGradient id="cp2" x1="0" y1="0" x2="0" y2="1"><stop offset="0" stop-color="#b060f0"/><stop offset="0.5" stop-color="#f060a0"/><stop offset="1" stop-color="#f88040"/></linearGradient></defs><rect x="1.5" y="0.5" width="13" height="17" rx="4.5" transform="skewX(-14)" fill="url(#cp1)" transform-origin="8 9"/><rect x="9.5" y="4.5" width="13" height="17" rx="4.5" transform="skewX(-14)" fill="url(#cp2)" transform-origin="16 13"/><path d="M11.5 6 L8.5 17" stroke="#1d1d1d" stroke-width="1.6"/></svg>
<svg style="left:931.5px;top:784.5px" width="25.5" height="24.5" viewBox="0 0 25.5 24.5"><defs><linearGradient id="adb" x1="0.5" y1="0" x2="0.5" y2="1"><stop offset="0" stop-color="#ff2a2a"/><stop offset="0.45" stop-color="#ff7a30"/><stop offset="0.75" stop-color="#c050f0"/><stop offset="1" stop-color="#7050ff"/></linearGradient></defs><rect width="25.5" height="24.5" rx="5" fill="#05081a"/><path d="M12.7 5 L19.5 18 Q20 19.5 18.5 19.3 L15.5 18.5 L12.7 13 L9.9 18.5 L7 19.3 Q5.5 19.5 6 18 Z" fill="url(#adb)" stroke="url(#adb)" stroke-width="1.5" stroke-linejoin="round"/></svg>
<div class="a" style="left:968px;top:777px;width:40.5px;height:39.5px;background:#2c2c2c;border-radius:5px"></div>
<svg style="left:976px;top:784.5px" width="25" height="24" viewBox="0 0 25 24"><defs><linearGradient id="zg" x1="0" y1="0" x2="0" y2="1"><stop offset="0" stop-color="#2a7aff"/><stop offset="1" stop-color="#0b4fe0"/></linearGradient></defs><rect x="0" y="0" width="25" height="24" rx="11" fill="url(#zg)"/><text x="12.5" y="14.2" font-family="Liberation Sans" font-size="6.3" fill="#fff" text-anchor="middle">zoom</text></svg>
<div class="a" style="left:981px;top:813px;width:16px;height:3px;background:#5fc8ff;border-radius:2px"></div>
<svg style="left:1023.5px;top:786.5px" width="20" height="22" viewBox="0 0 20 22"><defs><linearGradient id="ds1" x1="0" y1="0" x2="1" y2="1"><stop offset="0" stop-color="#ff9a40"/><stop offset="0.6" stop-color="#f04aa0"/><stop offset="1" stop-color="#c040e0"/></linearGradient><linearGradient id="ds2" x1="0" y1="0" x2="1" y2="1"><stop offset="0" stop-color="#5a6af0"/><stop offset="1" stop-color="#b050e8"/></linearGradient></defs><path d="M1 2.5 Q1 0.5 3 0.5 H8 Q18.5 0.5 19 10 Q19 13 17.5 14 Q15 8.5 8 8.5 H3.5 Q1 8.5 1 6 Z" fill="url(#ds1)"/><path d="M17.5 14 Q17 21.5 8 21.5 H4 Q1 21.5 1 18.5 Q1.5 12 8.5 11.5 Q14.5 11 17.5 14 Z" fill="url(#ds2)"/></svg>
<svg style="left:1064px;top:785.5px" width="25" height="23" viewBox="0 0 25 23"><rect x="6" y="0" width="19" height="23" rx="2" fill="#2b7cd3"/><rect x="6" y="0" width="19" height="6" rx="1" fill="#41a5ee"/><rect x="6" y="11" width="19" height="6" fill="#185abd"/><rect x="6" y="17" width="19" height="6" rx="1" fill="#103f91"/><rect x="0" y="5" width="13" height="13" rx="1.5" fill="#185abd"/><text x="6.5" y="15" font-family="Liberation Sans" font-weight="700" font-size="10" fill="#fff" text-anchor="middle">W</text></svg>
<div class="a" style="left:1073.5px;top:812.5px;width:6px;height:3px;background:#a0a0a0;border-radius:2px"></div>
<svg style="left:1108.5px;top:785.5px" width="25" height="23" viewBox="0 0 25 23"><rect x="6" y="0" width="19" height="23" rx="2" fill="#21a366"/><rect x="6" y="0" width="19" height="6" rx="1" fill="#33c481"/><rect x="6" y="11" width="19" height="6" fill="#107c41"/><rect x="6" y="17" width="19" height="6" rx="1" fill="#185c37"/><rect x="0" y="5" width="13" height="13" rx="1.5" fill="#107c41"/><text x="6.5" y="15" font-family="Liberation Sans" font-weight="700" font-size="10" fill="#fff" text-anchor="middle">X</text></svg>
<svg style="left:1291px;top:793px" width="13" height="8" viewBox="0 0 13 8"><path d="M1 7 L6.5 1.5 L12 7" fill="none" stroke="#fff" stroke-width="1.6"/></svg>
<svg style="left:1320.5px;top:791px" width="18" height="11" viewBox="0 0 18 11"><path d="M3.5 10.5 Q0.5 10.5 0.5 7.8 Q0.5 5 3.5 5 Q4.5 1 8.5 1 Q12 1 13 4 Q17.5 4 17.5 7.5 Q17.5 10.5 14.5 10.5 Z" fill="#d8d8d8"/></svg>
<svg style="left:1357px;top:788.5px" width="11" height="17" viewBox="0 0 11 17"><rect x="3" y="0.8" width="5" height="10" rx="2.5" fill="none" stroke="#62bde0" stroke-width="1.6"/><path d="M1 7.5 Q1 12.5 5.5 12.5 Q10 12.5 10 7.5 M5.5 12.5 V16.5" fill="none" stroke="#62bde0" stroke-width="1.6"/></svg>
<svg style="left:1385.5px;top:790px" width="17" height="13" viewBox="0 0 17 13"><path d="M0.8 4.5 Q8.5 -2 16.2 4.5 M3.3 7 Q8.5 2.5 13.7 7 M5.8 9.5 Q8.5 7.3 11.2 9.5" fill="none" stroke="#fff" stroke-width="1.5"/><circle cx="8.5" cy="11.8" r="1.2" fill="#fff"/></svg>
<svg style="left:1409.5px;top:790px" width="17" height="14" viewBox="0 0 17 14"><path d="M0.8 4.5 H3.5 L7.5 1 V13 L3.5 9.5 H0.8 Z" fill="none" stroke="#fff" stroke-width="1.3"/><path d="M10 4.5 Q11.5 7 10 9.5 M12.3 2.5 Q15 7 12.3 11.5 M14.5 0.8 Q18 7 14.5 13.2" fill="none" stroke="#fff" stroke-width="1.3"/></svg>
<svg style="left:1433.5px;top:789.5px" width="17" height="13" viewBox="0 0 17 13"><rect x="0.7" y="3.5" width="14" height="9" rx="1.5" fill="none" stroke="#fff" stroke-width="1.3"/><rect x="15" y="6" width="1.6" height="4" fill="#fff"/><path d="M5 0.5 L2.5 5.5 H6 L3.5 11" fill="none" stroke="#fff" stroke-width="1.2"/><rect x="7" y="5.5" width="6" height="5" fill="#fff"/></svg>
<span class="t" id="t105" style="left:1473.80px;top:782.56px;font-size:12.80px;color:#ffffff;transform:scaleX(0.8999);">3:24 PM</span>
<span class="t" id="t106" style="left:1466.80px;top:798.36px;font-size:12.80px;color:#ffffff;transform:scaleX(0.9352);">22-Jul-25</span>
</body></html>
